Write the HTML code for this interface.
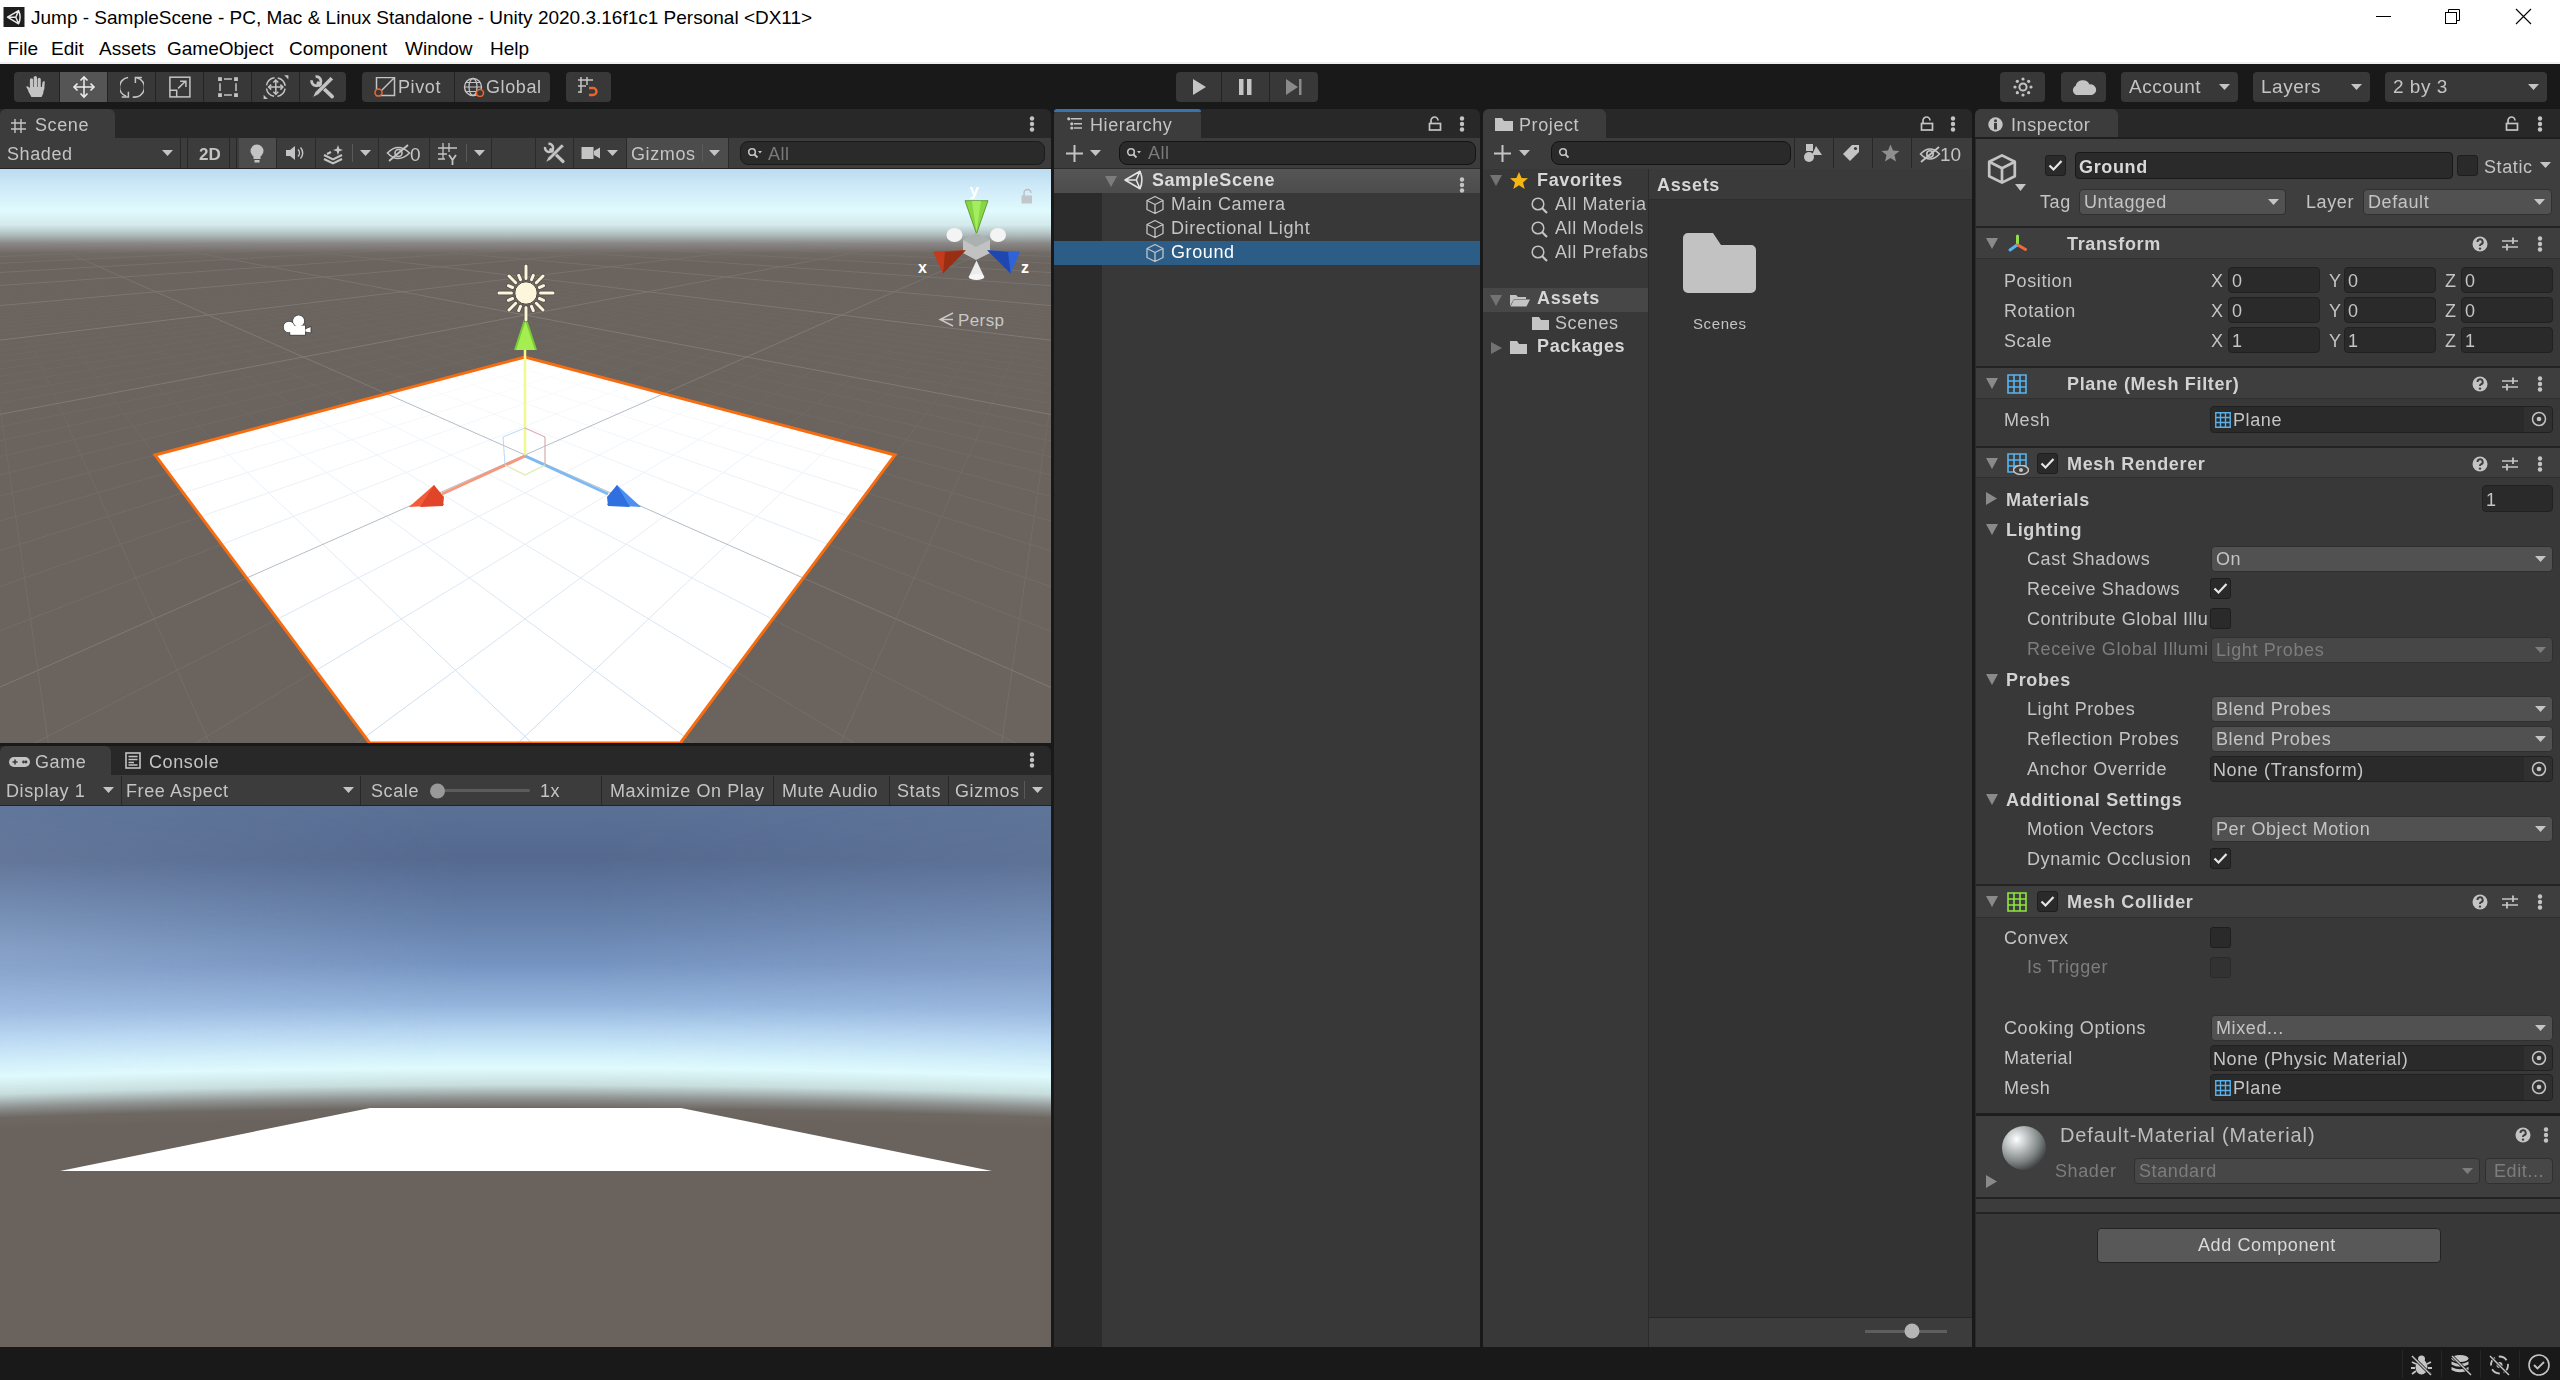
<!DOCTYPE html><html><head><meta charset="utf-8"><style>html,body{margin:0;padding:0;width:2560px;height:1380px;overflow:hidden;background:#191919;}body{position:relative;font-family:"Liberation Sans",sans-serif;}</style></head><body><div style="position:absolute;left:0px;top:0px;width:2560px;height:64px;background:#ffffff;"></div>
<div style="position:absolute;left:0px;top:62px;width:2560px;height:2px;background:#f0f0f0;"></div>
<svg style="position:absolute;left:3px;top:7px;" width="22" height="20" viewBox="0 0 22 20"><rect x="0.5" y="0" width="21" height="20" fill="#1e1e1e"/><path d="M4.5 10.2 L15.6 3.6 Q18.6 10.2 15.6 16.8 Z M4.5 10.2 H12.8 L15.6 3.6 M12.8 10.2 L15.6 16.8" fill="none" stroke="#e8e8e8" stroke-width="1.5" stroke-linejoin="round"/></svg>
<div style="position:absolute;left:31px;top:8px;font:normal 19px/1 'Liberation Sans',sans-serif;color:#000;white-space:nowrap;">Jump - SampleScene - PC, Mac &amp; Linux Standalone - Unity 2020.3.16f1c1 Personal &lt;DX11&gt;</div>
<div style="position:absolute;left:7.5px;top:39px;font:normal 19px/1 'Liberation Sans',sans-serif;color:#000;white-space:nowrap;">File</div>
<div style="position:absolute;left:51px;top:39px;font:normal 19px/1 'Liberation Sans',sans-serif;color:#000;white-space:nowrap;">Edit</div>
<div style="position:absolute;left:99px;top:39px;font:normal 19px/1 'Liberation Sans',sans-serif;color:#000;white-space:nowrap;">Assets</div>
<div style="position:absolute;left:167px;top:39px;font:normal 19px/1 'Liberation Sans',sans-serif;color:#000;white-space:nowrap;">GameObject</div>
<div style="position:absolute;left:289px;top:39px;font:normal 19px/1 'Liberation Sans',sans-serif;color:#000;white-space:nowrap;">Component</div>
<div style="position:absolute;left:405px;top:39px;font:normal 19px/1 'Liberation Sans',sans-serif;color:#000;white-space:nowrap;">Window</div>
<div style="position:absolute;left:490px;top:39px;font:normal 19px/1 'Liberation Sans',sans-serif;color:#000;white-space:nowrap;">Help</div>
<div style="position:absolute;left:2376px;top:16px;width:15px;height:1px;background:#000;"></div>
<svg style="position:absolute;left:2444px;top:8px;" width="18" height="18" viewBox="0 0 18 18"><rect x="1.5" y="4.5" width="11" height="11" fill="none" stroke="#000" stroke-width="1"/><path d="M4.5 4.5 V1.5 H15.5 V12.5 H12.5" fill="none" stroke="#000" stroke-width="1"/></svg>
<svg style="position:absolute;left:2515px;top:8px;" width="17" height="17" viewBox="0 0 17 17"><path d="M1 1 L16 16 M16 1 L1 16" stroke="#000" stroke-width="1.1"/></svg>
<div style="position:absolute;left:0px;top:64px;width:2560px;height:45px;background:#191919;"></div>
<div style="position:absolute;left:14px;top:72px;width:332px;height:30px;background:#383838;border-radius:4px;"></div>
<div style="position:absolute;left:60px;top:72px;width:47px;height:30px;background:#555555;"></div>
<div style="position:absolute;left:59px;top:72px;width:1px;height:30px;background:#232323;"></div>
<div style="position:absolute;left:107px;top:72px;width:1px;height:30px;background:#232323;"></div>
<div style="position:absolute;left:155px;top:72px;width:1px;height:30px;background:#232323;"></div>
<div style="position:absolute;left:203px;top:72px;width:1px;height:30px;background:#232323;"></div>
<div style="position:absolute;left:251px;top:72px;width:1px;height:30px;background:#232323;"></div>
<div style="position:absolute;left:299px;top:72px;width:1px;height:30px;background:#232323;"></div>
<svg style="position:absolute;left:24px;top:75px;" width="24" height="24" viewBox="0 0 24 24"><g fill="#c4c4c4"><path d="M2.2 11.8 Q3.3 10.6 4.6 11.9 L8.2 16.2 L6.5 19.5 Z"/><rect x="5.9" y="3.2" width="3.2" height="13" rx="1.6"/><rect x="9.7" y="1" width="3.3" height="15" rx="1.6"/><rect x="13.6" y="2.8" width="3.2" height="13" rx="1.6"/><path d="M17.4 15 L18.6 6.8 Q19.6 5.6 20.8 6.6 L20.2 15 Z"/><path d="M5.9 12 H20.2 L19.2 18.5 L17.6 22 H7.4 L4.5 16.5 Z"/></g></svg>
<svg style="position:absolute;left:72px;top:75px;" width="24" height="24" viewBox="0 0 24 24"><path d="M12 2 V22 M2 12 H22" stroke="#eeeeee" stroke-width="1.5"/><path d="M8.5 5.5 L12 2 L15.5 5.5 M8.5 18.5 L12 22 L15.5 18.5 M5.5 8.5 L2 12 L5.5 15.5 M18.5 8.5 L22 12 L18.5 15.5" stroke="#eeeeee" stroke-width="1.6" fill="none"/></svg>
<svg style="position:absolute;left:120px;top:76px;" width="24" height="24" viewBox="0 0 24 24"><path d="M8.1 1.6 A9.6 9.6 0 0 0 6.2 20.3" fill="none" stroke="#c4c4c4" stroke-width="1.5"/><path d="M1.8 20.9 H8.4 V15.7" fill="none" stroke="#c4c4c4" stroke-width="1.5"/><path d="M12.7 20.9 A9.6 9.6 0 0 0 16.7 1.8" fill="none" stroke="#c4c4c4" stroke-width="1.5"/><path d="M15.4 7.1 V1.6 H21.9" fill="none" stroke="#c4c4c4" stroke-width="1.5"/></svg>
<svg style="position:absolute;left:168px;top:76px;" width="24" height="24" viewBox="0 0 24 24"><rect x="1.9" y="1.2" width="20" height="19.7" fill="none" stroke="#c4c4c4" stroke-width="1.5"/><path d="M1.9 14.3 H8.7 V20.9" fill="none" stroke="#c4c4c4" stroke-width="1.5"/><path d="M10.2 12.4 L17.4 5.2 M12.1 5.2 H17.9 V11.1" fill="none" stroke="#c4c4c4" stroke-width="1.5"/></svg>
<svg style="position:absolute;left:216px;top:76px;" width="24" height="24" viewBox="0 0 24 24"><g fill="#c4c4c4"><rect x="2.1" y="1.2" width="3.8" height="3.8"/><rect x="18.1" y="1.2" width="3.8" height="3.8"/><rect x="2.1" y="17.2" width="3.8" height="3.8"/><rect x="18.1" y="17.2" width="3.8" height="3.8"/></g><path d="M8 3.1 H15.9 M8 19.1 H15.9 M4 7.2 V15 M20 7.2 V15" stroke="#c4c4c4" stroke-width="1.5"/></svg>
<svg style="position:absolute;left:262px;top:75px;" width="27" height="25" viewBox="0 0 27 25"><circle cx="13.8" cy="12.1" r="9.4" fill="none" stroke="#c4c4c4" stroke-width="1.5" stroke-dasharray="11.5 3.3" stroke-dashoffset="-1.6"/><path d="M13.8 5 V19.2 M6.7 12.1 H20.9" stroke="#c4c4c4" stroke-width="1.5"/><path d="M11.3 7.5 L13.8 5 L16.3 7.5 M11.3 16.7 L13.8 19.2 L16.3 16.7 M9.2 9.6 L6.7 12.1 L9.2 14.6 M18.4 9.6 L20.9 12.1 L18.4 14.6" fill="none" stroke="#c4c4c4" stroke-width="1.5"/><polygon points="22.2,0.3 26.4,0.3 26.4,4.5" fill="#c4c4c4"/><polygon points="1.6,19.8 1.6,24 5.8,24" fill="#c4c4c4"/></svg>
<svg style="position:absolute;left:310px;top:75px;" width="25" height="25" viewBox="0 0 25 25"><path d="M8.2 8.2 L22.2 21.6" stroke="#c4c4c4" stroke-width="3.6" stroke-linecap="round"/><path d="M1.8 5.2 A4.6 4.6 0 1 0 5.6 1.6" fill="none" stroke="#c4c4c4" stroke-width="2.8"/><polygon points="2.5,22.5 5.1,17.1 20.6,1.6 23.4,4.4 7.9,19.9" fill="#c4c4c4" stroke="#383838" stroke-width="0.8"/></svg>
<div style="position:absolute;left:362px;top:72px;width:188px;height:30px;background:#383838;border-radius:4px;"></div>
<div style="position:absolute;left:454px;top:72px;width:1px;height:30px;background:#232323;"></div>
<svg style="position:absolute;left:374px;top:77px;" width="22" height="20" viewBox="0 0 22 20"><rect x="2.5" y="0.5" width="18" height="18" fill="none" stroke="#c4c4c4" stroke-width="1.5"/><path d="M6 15 L20 1" stroke="#c4c4c4" stroke-width="1.5"/><circle cx="4.5" cy="15.5" r="3.5" fill="#383838" stroke="#f0642a" stroke-width="1.6"/></svg>
<div style="position:absolute;left:398px;top:78px;font:normal 18px/1 'Liberation Sans',sans-serif;color:#c4c4c4;white-space:nowrap;letter-spacing:0.6px;will-change:transform;">Pivot</div>
<svg style="position:absolute;left:463px;top:77px;" width="23" height="20" viewBox="0 0 23 20"><circle cx="10" cy="10" r="8.5" fill="none" stroke="#c4c4c4" stroke-width="1.4"/><ellipse cx="10" cy="10" rx="4" ry="8.5" fill="none" stroke="#c4c4c4" stroke-width="1.3"/><path d="M1.5 10 H18.5 M3 5.5 H17 M3 14.5 H17" stroke="#c4c4c4" stroke-width="1.2"/><circle cx="17" cy="16" r="3.5" fill="#383838" stroke="#f0642a" stroke-width="1.6"/></svg>
<div style="position:absolute;left:486px;top:78px;font:normal 18px/1 'Liberation Sans',sans-serif;color:#c4c4c4;white-space:nowrap;letter-spacing:0.6px;will-change:transform;">Global</div>
<div style="position:absolute;left:566px;top:72px;width:45px;height:30px;background:#383838;border-radius:4px;"></div>
<svg style="position:absolute;left:577px;top:76px;" width="24" height="22" viewBox="0 0 24 22"><path d="M4 1 V17 M10 1 V9 M1 4 H16 M1 10 H9 M1 16 H4" stroke="#c4c4c4" stroke-width="1.5"/><path d="M12 12 H16 A3.5 3.5 0 0 1 16 19 H12" fill="none" stroke="#f0642a" stroke-width="2.4"/></svg>
<div style="position:absolute;left:1176px;top:72px;width:142px;height:30px;background:#383838;border-radius:4px;"></div>
<div style="position:absolute;left:1221px;top:72px;width:1px;height:30px;background:#232323;"></div>
<div style="position:absolute;left:1269px;top:72px;width:1px;height:30px;background:#232323;"></div>
<svg style="position:absolute;left:1189px;top:77px;" width="20" height="20" viewBox="0 0 20 20"><polygon points="4,2 17,10 4,18" fill="#c4c4c4"/></svg>
<svg style="position:absolute;left:1236px;top:78px;" width="20" height="18" viewBox="0 0 20 18"><rect x="3" y="1" width="4.5" height="16" fill="#c4c4c4"/><rect x="11" y="1" width="4.5" height="16" fill="#c4c4c4"/></svg>
<svg style="position:absolute;left:1284px;top:78px;" width="20" height="18" viewBox="0 0 20 18"><polygon points="2,1 14,9 2,17" fill="#8a8a8a"/><rect x="15" y="1" width="2.5" height="16" fill="#8a8a8a"/></svg>
<div style="position:absolute;left:2000px;top:72px;width:45px;height:30px;background:#383838;border-radius:4px;"></div>
<svg style="position:absolute;left:2012px;top:76px;" width="22" height="22" viewBox="0 0 22 22"><circle cx="11" cy="11" r="3.6" fill="none" stroke="#c4c4c4" stroke-width="2"/><circle cx="19.00" cy="11.00" r="1.6" fill="#c4c4c4"/><circle cx="16.66" cy="16.66" r="1.6" fill="#c4c4c4"/><circle cx="11.00" cy="19.00" r="1.6" fill="#c4c4c4"/><circle cx="5.34" cy="16.66" r="1.6" fill="#c4c4c4"/><circle cx="3.00" cy="11.00" r="1.6" fill="#c4c4c4"/><circle cx="5.34" cy="5.34" r="1.6" fill="#c4c4c4"/><circle cx="11.00" cy="3.00" r="1.6" fill="#c4c4c4"/><circle cx="16.66" cy="5.34" r="1.6" fill="#c4c4c4"/></svg>
<div style="position:absolute;left:2061px;top:72px;width:45px;height:30px;background:#383838;border-radius:4px;"></div>
<svg style="position:absolute;left:2070px;top:78px;" width="28" height="18" viewBox="0 0 28 18"><path d="M6 17 A5 5 0 0 1 5.5 8 A7.5 7.5 0 0 1 19.5 6.5 A5.2 5.2 0 0 1 22 17 Z" fill="#c4c4c4"/></svg>
<div style="position:absolute;left:2121px;top:72px;width:117px;height:30px;background:#383838;border-radius:4px;"></div>
<div style="position:absolute;left:2129px;top:77px;font:normal 19px/1 'Liberation Sans',sans-serif;color:#c4c4c4;white-space:nowrap;letter-spacing:0.5px;will-change:transform;">Account</div>
<svg style="position:absolute;left:2218.5px;top:84px;" width="11" height="6" viewBox="0 0 11 6"><polygon points="0,0 11,0 5.5,6" fill="#c4c4c4"/></svg>
<div style="position:absolute;left:2253px;top:72px;width:117px;height:30px;background:#383838;border-radius:4px;"></div>
<div style="position:absolute;left:2261px;top:77px;font:normal 19px/1 'Liberation Sans',sans-serif;color:#c4c4c4;white-space:nowrap;letter-spacing:0.5px;will-change:transform;">Layers</div>
<svg style="position:absolute;left:2350.5px;top:84px;" width="11" height="6" viewBox="0 0 11 6"><polygon points="0,0 11,0 5.5,6" fill="#c4c4c4"/></svg>
<div style="position:absolute;left:2385px;top:72px;width:162px;height:30px;background:#383838;border-radius:4px;"></div>
<div style="position:absolute;left:2393px;top:77px;font:normal 19px/1 'Liberation Sans',sans-serif;color:#c4c4c4;white-space:nowrap;letter-spacing:0.5px;will-change:transform;">2 by 3</div>
<svg style="position:absolute;left:2527.5px;top:84px;" width="11" height="6" viewBox="0 0 11 6"><polygon points="0,0 11,0 5.5,6" fill="#c4c4c4"/></svg>
<div style="position:absolute;left:0px;top:109px;width:1051px;height:29px;background:#282828;border-top-right-radius:6px;"></div>
<div style="position:absolute;left:0px;top:109px;width:115px;height:29px;background:#3c3c3c;border-top-left-radius:6px;border-top-right-radius:6px;"></div>
<svg style="position:absolute;left:10px;top:118px;" width="17" height="16" viewBox="0 0 17 16"><path d="M5 1 V15 M11 1 V15 M1 5 H16 M1 11 H16" stroke="#c4c4c4" stroke-width="1.4"/></svg>
<div style="position:absolute;left:35px;top:116px;font:normal 18px/1 'Liberation Sans',sans-serif;color:#c4c4c4;white-space:nowrap;letter-spacing:0.6px;will-change:transform;">Scene</div>
<svg style="position:absolute;left:1029px;top:116px;" width="6" height="16" viewBox="0 0 6 16"><circle cx="3" cy="2.5" r="2.2" fill="#c4c4c4"/><circle cx="3" cy="8" r="2.2" fill="#c4c4c4"/><circle cx="3" cy="13.5" r="2.2" fill="#c4c4c4"/></svg>
<div style="position:absolute;left:0px;top:138px;width:1051px;height:31px;background:#3c3c3c;"></div>
<div style="position:absolute;left:0px;top:168px;width:1051px;height:1px;background:#232323;"></div>
<div style="position:absolute;left:7px;top:145px;font:normal 18px/1 'Liberation Sans',sans-serif;color:#c4c4c4;white-space:nowrap;letter-spacing:0.6px;will-change:transform;">Shaded</div>
<svg style="position:absolute;left:162.0px;top:150px;" width="11" height="6" viewBox="0 0 11 6"><polygon points="0,0 11,0 5.5,6" fill="#c4c4c4"/></svg>
<div style="position:absolute;left:180px;top:138px;width:1px;height:30px;background:#282828;"></div>
<div style="position:absolute;left:187px;top:138px;width:1px;height:30px;background:#282828;"></div>
<div style="position:absolute;left:229px;top:138px;width:1px;height:30px;background:#282828;"></div>
<div style="position:absolute;left:236px;top:138px;width:1px;height:30px;background:#282828;"></div>
<div style="position:absolute;left:199px;top:146px;font:bold 17px/1 'Liberation Sans',sans-serif;color:#c4c4c4;white-space:nowrap;will-change:transform;">2D</div>
<div style="position:absolute;left:239px;top:138px;width:37px;height:30px;background:#4c4c4c;"></div>
<div style="position:absolute;left:627px;top:138px;width:101px;height:30px;background:#4c4c4c;"></div>
<div style="position:absolute;left:276px;top:138px;width:1px;height:30px;background:#2a2a2a;"></div>
<div style="position:absolute;left:315px;top:138px;width:1px;height:30px;background:#2a2a2a;"></div>
<div style="position:absolute;left:378px;top:138px;width:1px;height:30px;background:#2a2a2a;"></div>
<div style="position:absolute;left:429px;top:138px;width:1px;height:30px;background:#2a2a2a;"></div>
<div style="position:absolute;left:491px;top:138px;width:1px;height:30px;background:#2a2a2a;"></div>
<div style="position:absolute;left:535px;top:138px;width:1px;height:30px;background:#2a2a2a;"></div>
<div style="position:absolute;left:573px;top:138px;width:1px;height:30px;background:#2a2a2a;"></div>
<div style="position:absolute;left:626px;top:138px;width:1px;height:30px;background:#2a2a2a;"></div>
<div style="position:absolute;left:728px;top:138px;width:1px;height:30px;background:#2a2a2a;"></div>
<svg style="position:absolute;left:248px;top:143px;" width="18" height="22" viewBox="0 0 18 22"><circle cx="9" cy="8" r="6.5" fill="#c4c4c4"/><rect x="5.5" y="13" width="7" height="3" fill="#c4c4c4"/><rect x="6.5" y="17" width="5" height="2.5" fill="#c4c4c4"/></svg>
<svg style="position:absolute;left:285px;top:144px;" width="20" height="18" viewBox="0 0 20 18"><rect x="1" y="6" width="4" height="6" fill="#c4c4c4"/><polygon points="5,6 10,2 10,16 5,12" fill="#c4c4c4"/><path d="M13 5.5 A5 5 0 0 1 13 12.5 M15.5 3.5 A8 8 0 0 1 15.5 14.5" stroke="#c4c4c4" stroke-width="1.5" fill="none"/></svg>
<svg style="position:absolute;left:322px;top:143px;" width="24" height="22" viewBox="0 0 24 22"><path d="M2 12 L11 16.5 L20 12 M2 16 L11 20.5 L20 16" stroke="#c4c4c4" stroke-width="2" fill="none"/><path d="M16 2 L17.3 5.7 L21 7 L17.3 8.3 L16 12 L14.7 8.3 L11 7 L14.7 5.7 Z" fill="#c4c4c4"/><path d="M5 11 L9 9" stroke="#c4c4c4" stroke-width="2"/></svg>
<div style="position:absolute;left:352px;top:144px;width:1px;height:18px;background:#5a5a5a;"></div>
<svg style="position:absolute;left:359.5px;top:150px;" width="11" height="6" viewBox="0 0 11 6"><polygon points="0,0 11,0 5.5,6" fill="#c4c4c4"/></svg>
<svg style="position:absolute;left:386px;top:143px;" width="26" height="20" viewBox="0 0 26 20"><path d="M1.5 10 Q12 -1 23.5 10 Q12 21 1.5 10 Z" fill="none" stroke="#c4c4c4" stroke-width="1.6"/><circle cx="12.5" cy="10" r="3.5" fill="none" stroke="#c4c4c4" stroke-width="1.6"/><path d="M3 18 L22 2" stroke="#c4c4c4" stroke-width="1.8"/></svg>
<div style="position:absolute;left:410px;top:145px;font:normal 19px/1 'Liberation Sans',sans-serif;color:#c4c4c4;white-space:nowrap;will-change:transform;">0</div>
<svg style="position:absolute;left:437px;top:142px;" width="24" height="24" viewBox="0 0 24 24"><path d="M6 1 V17 M12 1 V10 M1 6 H20 M1 12 H10 M1 17 H8" stroke="#c4c4c4" stroke-width="1.3"/><path d="M12 13 L15.5 18 L19 13 M15.5 18 V23" stroke="#c4c4c4" stroke-width="1.8" fill="none"/></svg>
<div style="position:absolute;left:466px;top:144px;width:1px;height:18px;background:#5a5a5a;"></div>
<svg style="position:absolute;left:473.5px;top:150px;" width="11" height="6" viewBox="0 0 11 6"><polygon points="0,0 11,0 5.5,6" fill="#c4c4c4"/></svg>
<svg style="position:absolute;left:542px;top:141px;" width="25" height="25" viewBox="0 0 25 25"><g transform="translate(1.5 1.5) scale(0.88)"><path d="M8.2 8.2 L22.2 21.6" stroke="#c4c4c4" stroke-width="3.6" stroke-linecap="round"/><path d="M1.8 5.2 A4.6 4.6 0 1 0 5.6 1.6" fill="none" stroke="#c4c4c4" stroke-width="2.8"/><polygon points="2.5,22.5 5.1,17.1 20.6,1.6 23.4,4.4 7.9,19.9" fill="#c4c4c4" stroke="#3c3c3c" stroke-width="0.8"/></g></svg>
<svg style="position:absolute;left:581px;top:146px;" width="20" height="14" viewBox="0 0 20 14"><rect x="0.5" y="1" width="12" height="12" fill="#c4c4c4"/><polygon points="13,5 19,1.5 19,12.5 13,9" fill="#c4c4c4"/></svg>
<svg style="position:absolute;left:607.0px;top:150px;" width="11" height="6" viewBox="0 0 11 6"><polygon points="0,0 11,0 5.5,6" fill="#c4c4c4"/></svg>
<div style="position:absolute;left:631px;top:145px;font:normal 18px/1 'Liberation Sans',sans-serif;color:#c4c4c4;white-space:nowrap;letter-spacing:0.6px;will-change:transform;">Gizmos</div>
<div style="position:absolute;left:702px;top:144px;width:1px;height:18px;background:#5a5a5a;"></div>
<svg style="position:absolute;left:709.0px;top:150px;" width="11" height="6" viewBox="0 0 11 6"><polygon points="0,0 11,0 5.5,6" fill="#c4c4c4"/></svg>
<div style="position:absolute;left:740px;top:141px;width:305px;height:24px;box-sizing:border-box;background:#2a2a2a;border:1px solid #1b1b1b;border-radius:8px;"></div>
<svg style="position:absolute;left:747px;top:147px;" width="16" height="12" viewBox="0 0 16 12"><circle cx="5" cy="5" r="3.3" fill="none" stroke="#c4c4c4" stroke-width="1.6"/><path d="M7.5 7.5 L10.5 10.5" stroke="#c4c4c4" stroke-width="1.8"/><polygon points="11,4 15,4 13,6.5" fill="#c4c4c4"/></svg>
<div style="position:absolute;left:768px;top:145px;font:normal 18px/1 'Liberation Sans',sans-serif;color:#7a7a7a;white-space:nowrap;letter-spacing:0.5px;will-change:transform;">All</div>
<svg style="position:absolute;left:0px;top:169px;" width="1051" height="574" viewBox="0 0 1051 574"><defs><linearGradient id="sky" gradientUnits="userSpaceOnUse" x1="0" y1="169" x2="0" y2="262"><stop offset="0" stop-color="#bcdbf1"/><stop offset="0.2" stop-color="#cfeaf8"/><stop offset="0.45" stop-color="#e0fafd"/><stop offset="0.6" stop-color="#d4eaec"/><stop offset="0.7" stop-color="#b2c0c1"/><stop offset="0.8" stop-color="#8a8887"/><stop offset="0.9" stop-color="#716b67"/><stop offset="1" stop-color="#6a635e"/></linearGradient><linearGradient id="fadeMinor" gradientUnits="userSpaceOnUse" x1="0" y1="250" x2="0" y2="743"><stop offset="0" stop-color="#fff" stop-opacity="0"/><stop offset="0.1" stop-color="#fff" stop-opacity="0.25"/><stop offset="0.5" stop-color="#fff" stop-opacity="0.8"/><stop offset="1" stop-color="#fff" stop-opacity="1"/></linearGradient><linearGradient id="fadePlane" gradientUnits="userSpaceOnUse" x1="0" y1="357" x2="0" y2="743"><stop offset="0" stop-color="#fff" stop-opacity="0.05"/><stop offset="0.4" stop-color="#fff" stop-opacity="0.4"/><stop offset="1" stop-color="#fff" stop-opacity="0.9"/></linearGradient><mask id="mPlane" maskUnits="userSpaceOnUse" x="0" y="169" width="1051" height="574"><rect x="0" y="169" width="1051" height="574" fill="url(#fadePlane)"/></mask><linearGradient id="fadeMajor" gradientUnits="userSpaceOnUse" x1="0" y1="240" x2="0" y2="340"><stop offset="0" stop-color="#fff" stop-opacity="0"/><stop offset="0.25" stop-color="#fff" stop-opacity="0.6"/><stop offset="0.8" stop-color="#fff" stop-opacity="1"/><stop offset="1" stop-color="#fff" stop-opacity="1"/></linearGradient><mask id="mMinor" maskUnits="userSpaceOnUse" x="0" y="169" width="1051" height="574"><rect x="0" y="169" width="1051" height="574" fill="url(#fadeMinor)"/></mask><mask id="mMajor" maskUnits="userSpaceOnUse" x="0" y="169" width="1051" height="574"><rect x="0" y="169" width="1051" height="574" fill="url(#fadeMajor)"/></mask><clipPath id="planeClip"><polygon points="155,455 525,357 895,455 680.4,743 369.6,743"/></clipPath></defs><g transform="translate(0,-169)"><rect x="0" y="169" width="1051" height="574" fill="#6a635e"/><rect x="0" y="169" width="1051" height="92" fill="url(#sky)"/><g mask="url(#mMinor)"><path d="M1054.2 211.7 L-49655.8 2732.2 M-4.2 211.7 L50705.8 2732.2 M1054.6 211.7 L-48892.6 2732.2 M-4.6 211.7 L49942.6 2732.2 M1054.9 211.7 L-48129.4 2732.2 M-4.9 211.7 L49179.4 2732.2 M1055.3 211.7 L-47366.1 2732.2 M-5.3 211.7 L48416.1 2732.2 M1055.6 211.7 L-46602.9 2732.2 M-5.6 211.7 L47652.9 2732.2 M1056.0 211.7 L-45839.7 2732.2 M-6.0 211.7 L46889.7 2732.2 M1056.3 211.7 L-45076.5 2732.2 M-6.3 211.7 L46126.5 2732.2 M1056.7 211.7 L-44313.3 2732.2 M-6.7 211.7 L45363.3 2732.2 M1057.0 211.7 L-43550.1 2732.2 M-7.0 211.7 L44600.1 2732.2 M1057.7 211.7 L-42023.7 2732.2 M-7.7 211.7 L43073.7 2732.2 M1058.1 211.7 L-41260.5 2732.2 M-8.1 211.7 L42310.5 2732.2 M1058.4 211.7 L-40497.3 2732.2 M-8.4 211.7 L41547.3 2732.2 M1058.8 211.7 L-39734.1 2732.2 M-8.8 211.7 L40784.1 2732.2 M1059.2 211.7 L-38970.9 2732.2 M-9.2 211.7 L40020.9 2732.2 M1059.5 211.7 L-38207.7 2732.2 M-9.5 211.7 L39257.7 2732.2 M1059.9 211.7 L-37444.5 2732.2 M-9.9 211.7 L38494.5 2732.2 M1060.2 211.7 L-36681.3 2732.2 M-10.2 211.7 L37731.3 2732.2 M1060.6 211.7 L-35918.1 2732.2 M-10.6 211.7 L36968.1 2732.2 M1061.3 211.7 L-34391.7 2732.2 M-11.3 211.7 L35441.7 2732.2 M1061.7 211.7 L-33628.4 2732.2 M-11.7 211.7 L34678.4 2732.2 M1062.0 211.7 L-32865.2 2732.2 M-12.0 211.7 L33915.2 2732.2 M1062.4 211.7 L-32102.0 2732.2 M-12.4 211.7 L33152.0 2732.2 M1062.7 211.7 L-31338.8 2732.2 M-12.7 211.7 L32388.8 2732.2 M1063.1 211.7 L-30575.6 2732.2 M-13.1 211.7 L31625.6 2732.2 M1063.4 211.7 L-29812.4 2732.2 M-13.4 211.7 L30862.4 2732.2 M1063.8 211.7 L-29049.2 2732.2 M-13.8 211.7 L30099.2 2732.2 M1064.2 211.7 L-28286.0 2732.2 M-14.2 211.7 L29336.0 2732.2 M1064.9 211.7 L-26759.6 2732.2 M-14.9 211.7 L27809.6 2732.2 M1065.2 211.7 L-25996.4 2732.2 M-15.2 211.7 L27046.4 2732.2 M1065.6 211.7 L-25233.2 2732.2 M-15.6 211.7 L26283.2 2732.2 M1066.0 211.7 L-24470.0 2732.2 M-16.0 211.7 L25520.0 2732.2 M1066.3 211.7 L-23706.8 2732.2 M-16.3 211.7 L24756.8 2732.2 M1066.7 211.7 L-22943.6 2732.2 M-16.7 211.7 L23993.6 2732.2 M1067.0 211.7 L-22180.4 2732.2 M-17.0 211.7 L23230.4 2732.2 M1067.4 211.7 L-21417.2 2732.2 M-17.4 211.7 L22467.2 2732.2 M1067.8 211.7 L-20654.0 2732.2 M-17.8 211.7 L21704.0 2732.2 M1068.5 211.7 L-19127.5 2732.2 M-18.5 211.7 L20177.5 2732.2 M1068.8 211.7 L-18364.3 2732.2 M-18.8 211.7 L19414.3 2732.2 M1069.2 211.7 L-17601.1 2732.2 M-19.2 211.7 L18651.1 2732.2 M1069.6 211.7 L-16837.9 2732.2 M-19.6 211.7 L17887.9 2732.2 M1069.9 211.7 L-16074.7 2732.2 M-19.9 211.7 L17124.7 2732.2 M1070.3 211.7 L-15311.5 2732.2 M-20.3 211.7 L16361.5 2732.2 M1070.7 211.7 L-14548.3 2732.2 M-20.7 211.7 L15598.3 2732.2 M1071.0 211.7 L-13785.1 2732.2 M-21.0 211.7 L14835.1 2732.2 M1071.4 211.7 L-13021.9 2732.2 M-21.4 211.7 L14071.9 2732.2 M1072.1 211.7 L-11495.5 2732.2 M-22.1 211.7 L12545.5 2732.2 M1072.5 211.7 L-10732.3 2732.2 M-22.5 211.7 L11782.3 2732.2 M1072.8 211.7 L-9969.1 2732.2 M-22.8 211.7 L11019.1 2732.2 M1073.2 211.7 L-9205.9 2732.2 M-23.2 211.7 L10255.9 2732.2 M1073.6 211.7 L-8442.7 2732.2 M-23.6 211.7 L9492.7 2732.2 M1073.9 211.7 L-7679.5 2732.2 M-23.9 211.7 L8729.5 2732.2 M1074.3 211.7 L-6916.3 2732.2 M-24.3 211.7 L7966.3 2732.2 M1074.7 211.7 L-6153.0 2732.2 M-24.7 211.7 L7203.0 2732.2 M1075.0 211.7 L-5389.8 2732.2 M-25.0 211.7 L6439.8 2732.2 M1075.8 211.7 L-3863.4 2732.2 M-25.8 211.7 L4913.4 2732.2 M1076.1 211.7 L-3100.2 2732.2 M-26.1 211.7 L4150.2 2732.2 M1076.5 211.7 L-2337.0 2732.2 M-26.5 211.7 L3387.0 2732.2 M1076.9 211.7 L-1573.8 2732.2 M-26.9 211.7 L2623.8 2732.2 M1077.2 211.7 L-810.6 2732.2 M-27.2 211.7 L1860.6 2732.2 M1077.6 211.7 L-47.4 2732.2 M-27.6 211.7 L1097.4 2732.2 M1078.0 211.7 L715.8 2732.2 M-28.0 211.7 L334.2 2732.2 M1078.3 211.7 L1479.0 2732.2 M-28.3 211.7 L-429.0 2732.2 M1078.7 211.7 L2242.2 2732.2 M-28.7 211.7 L-1192.2 2732.2 M1079.4 211.7 L3768.6 2732.2 M-29.4 211.7 L-2718.6 2732.2 M1079.8 211.7 L4531.8 2732.2 M-29.8 211.7 L-3481.8 2732.2 M1080.2 211.7 L5295.0 2732.2 M-30.2 211.7 L-4245.0 2732.2 M1080.5 211.7 L6058.2 2732.2 M-30.5 211.7 L-5008.2 2732.2" stroke="#746e6a" stroke-width="1" fill="none"/></g><g mask="url(#mMajor)"><path d="M975.5 211.6 L-233588.3 2732.2 M74.5 211.6 L234638.3 2732.2 M978.6 211.6 L-225956.3 2732.2 M71.4 211.6 L227006.3 2732.2 M981.6 211.6 L-218324.2 2732.2 M68.4 211.6 L219374.2 2732.2 M984.7 211.6 L-210692.1 2732.2 M65.3 211.6 L211742.1 2732.2 M987.8 211.6 L-203060.1 2732.2 M62.2 211.6 L204110.1 2732.2 M990.9 211.6 L-195428.0 2732.2 M59.1 211.6 L196478.0 2732.2 M994.0 211.6 L-187796.0 2732.2 M56.0 211.6 L188846.0 2732.2 M997.2 211.6 L-180163.9 2732.2 M52.8 211.6 L181213.9 2732.2 M1000.3 211.6 L-172531.9 2732.2 M49.7 211.6 L173581.9 2732.2 M1003.5 211.6 L-164899.8 2732.2 M46.5 211.6 L165949.8 2732.2 M1006.7 211.6 L-157267.8 2732.2 M43.3 211.6 L158317.8 2732.2 M1010.0 211.6 L-149635.7 2732.2 M40.0 211.6 L150685.7 2732.2 M1013.2 211.6 L-142003.6 2732.2 M36.8 211.6 L143053.6 2732.2 M1016.5 211.6 L-134371.6 2732.2 M33.5 211.6 L135421.6 2732.2 M1019.8 211.6 L-126739.5 2732.2 M30.2 211.6 L127789.5 2732.2 M1023.1 211.6 L-119107.5 2732.2 M26.9 211.6 L120157.5 2732.2 M1026.4 211.7 L-111475.4 2732.2 M23.6 211.7 L112525.4 2732.2 M1029.8 211.7 L-103843.4 2732.2 M20.2 211.7 L104893.4 2732.2 M1033.1 211.7 L-96211.3 2732.2 M16.9 211.7 L97261.3 2732.2 M1036.5 211.7 L-88579.3 2732.2 M13.5 211.7 L89629.3 2732.2 M1040.0 211.7 L-80947.2 2732.2 M10.0 211.7 L81997.2 2732.2 M1043.4 211.7 L-73315.1 2732.2 M6.6 211.7 L74365.1 2732.2 M1046.9 211.7 L-65683.1 2732.2 M3.1 211.7 L66733.1 2732.2 M1050.3 211.7 L-58051.0 2732.2 M-0.3 211.7 L59101.0 2732.2 M1053.9 211.7 L-50419.0 2732.2 M-3.9 211.7 L51469.0 2732.2 M1057.4 211.7 L-42786.9 2732.2 M-7.4 211.7 L43836.9 2732.2 M1060.9 211.7 L-35154.9 2732.2 M-10.9 211.7 L36204.9 2732.2 M1064.5 211.7 L-27522.8 2732.2 M-14.5 211.7 L28572.8 2732.2 M1068.1 211.7 L-19890.7 2732.2 M-18.1 211.7 L20940.7 2732.2 M1071.7 211.7 L-12258.7 2732.2 M-21.7 211.7 L13308.7 2732.2 M1075.4 211.7 L-4626.6 2732.2 M-25.4 211.7 L5676.6 2732.2 M1079.1 211.7 L3005.4 2732.2 M-29.1 211.7 L-1955.4 2732.2" stroke="#7f7a76" stroke-width="1" fill="none"/></g><polygon points="155,455 525,357 895,455 680.4,743 369.6,743" fill="#ffffff"/><g clip-path="url(#planeClip)"><g mask="url(#mPlane)"><path d="M548.1 363.1 L168.1 472.5 M501.9 363.1 L881.9 472.5 M573.2 369.8 L183.3 492.8 M476.8 369.8 L866.7 492.8 M600.6 377.0 L201.0 516.4 M449.4 377.0 L849.0 516.4 M630.6 385.0 L221.9 544.3 M419.4 385.0 L828.1 544.3 M700.1 403.4 L277.8 618.9 M349.9 403.4 L772.2 618.9 M740.7 414.1 L316.3 670.3 M309.3 414.1 L733.7 670.3 M786.1 426.1 L365.8 736.5 M263.9 426.1 L684.2 736.5 M837.1 439.7 L432.0 824.9 M212.9 439.7 L618.0 824.9" stroke="#c3d7ea" stroke-width="1" fill="none"/></g><path d="M663.6 393.7 L247.0 577.9 M386.4 393.7 L803.0 577.9" stroke="#a7b1bb" stroke-width="1" opacity="0.85" fill="none"/></g><polygon points="155,455 525,357 895,455 680.4,743 369.6,743" fill="none" stroke="#f66c10" stroke-width="3"/><path d="M525 456 L525 350" stroke="#f2f88f" stroke-width="2.5"/><path d="M525 456 L442 494" stroke="#f7977d" stroke-width="3"/><path d="M525 456 L608 494" stroke="#7fb9f3" stroke-width="3"/><path d="M503 437 L525 428 L545 437 L545 465 L525 475 L505 465 Z" fill="none" stroke="#a8cff3" stroke-width="1" opacity="0.8"/><path d="M525 428 L545 437 L545 465" fill="none" stroke="#f5a090" stroke-width="1" opacity="0.8"/><path d="M505 465 L525 475 L545 465" fill="none" stroke="#f3f28a" stroke-width="1" opacity="0.8"/><polygon points="525.5,318 515,350 536,350" fill="#a4ee52"/><path d="M525.5 318 L515 350" stroke="#78cc36" stroke-width="2"/><path d="M525.5 318 L536 350" stroke="#78cc36" stroke-width="2"/><polygon points="409,507 434,485 444,505" fill="#f55a38"/><polygon points="434,485 444,497 443,506 420,507" fill="#e0452a"/><polygon points="641,507 617,485 607,505" fill="#4e8ff0"/><polygon points="617,485 607,497 608,506 630,507" fill="#2f6fe0"/><circle cx="526" cy="293" r="11.2" fill="#fdf5dc" stroke="#4a4542" stroke-width="1"/><path d="M540.5 293.0 L553.0 293.0 M539.4 298.5 L543.6 300.3 M536.3 303.3 L543.0 310.0 M531.5 306.4 L533.3 310.6 M526.0 307.5 L526.0 320.0 M520.5 306.4 L518.7 310.6 M515.7 303.3 L509.0 310.0 M512.6 298.5 L508.4 300.3 M511.5 293.0 L499.0 293.0 M512.6 287.5 L508.4 285.7 M515.7 282.7 L509.0 276.0 M520.5 279.6 L518.7 275.4 M526.0 278.5 L526.0 266.0 M531.5 279.6 L533.3 275.4 M536.3 282.7 L543.0 276.0 M539.4 287.5 L543.6 285.7" stroke="#4a4542" stroke-width="4.4" stroke-linecap="round" opacity="0.8"/><path d="M540.5 293.0 L553.0 293.0 M539.4 298.5 L543.6 300.3 M536.3 303.3 L543.0 310.0 M531.5 306.4 L533.3 310.6 M526.0 307.5 L526.0 320.0 M520.5 306.4 L518.7 310.6 M515.7 303.3 L509.0 310.0 M512.6 298.5 L508.4 300.3 M511.5 293.0 L499.0 293.0 M512.6 287.5 L508.4 285.7 M515.7 282.7 L509.0 276.0 M520.5 279.6 L518.7 275.4 M526.0 278.5 L526.0 266.0 M531.5 279.6 L533.3 275.4 M536.3 282.7 L543.0 276.0 M539.4 287.5 L543.6 285.7" stroke="#fdf5dc" stroke-width="3" stroke-linecap="round"/><g fill="#ffffff" stroke="#3a3634" stroke-width="0.8"><circle cx="289" cy="327" r="5.6"/><circle cx="298.6" cy="321" r="5.8"/><rect x="290" y="325.3" width="15.4" height="9.7"/><polygon points="305,329 311,326.4 311,333 305,332"/></g><g fill="#ffffff"><circle cx="289" cy="327" r="5.2"/><circle cx="298.6" cy="321" r="5.4"/><rect x="290.4" y="325.7" width="14.6" height="8.9"/></g><polygon points="965,200.7 988,200.7 976.5,233.6" fill="#86d843" stroke="#4f8a22" stroke-width="0.8"/><polygon points="972,201 981,201 976.5,232" fill="#a6ec60"/><ellipse cx="954.5" cy="235" rx="8" ry="7" fill="#f4f4f4"/><ellipse cx="998" cy="235" rx="8" ry="7" fill="#f4f4f4"/><polygon points="963,240 976,233 990,240 990,253 976,260 963,253" fill="#c2c2c2"/><polygon points="963,240 976,233 990,240 976,247" fill="#a9b1b1"/><polygon points="932.9,251.5 965.7,250.3 943,273.6" fill="#c43a1c"/><polygon points="945,252 965.7,250.3 943,273.6" fill="#9a2e12"/><polygon points="987.2,250.3 1020,251.5 1010.6,273.6" fill="#2f63da"/><polygon points="987.2,250.3 1008,252 1010.6,273.6" fill="#1f47b0"/><polygon points="976.5,260.5 968.7,277 984.3,277" fill="#ececec"/><ellipse cx="976.5" cy="277" rx="7.8" ry="3" fill="#f6f6f6"/><text x="969.5" y="196" font-family="Liberation Sans" font-size="17" font-weight="bold" fill="#ffffff">y</text><text x="918" y="273" font-family="Liberation Sans" font-size="16" font-weight="bold" fill="#ffffff">x</text><text x="1021" y="273" font-family="Liberation Sans" font-size="16" font-weight="bold" fill="#ffffff">z</text><path d="M1024 196 V193 A3.5 3.5 0 0 1 1031 193" fill="none" stroke="#b0b0b0" stroke-width="1.3" opacity="0.8"/><rect x="1021.5" y="195.5" width="10.5" height="8" fill="#bcbcbc" opacity="0.8"/><path d="M953 313 L940 319.5 L953 326 M940 319.5 H953" stroke="#c8c8c8" stroke-width="1.4" fill="none"/><text x="958" y="326" font-family="Liberation Sans" font-size="17" fill="#c8c8c8" letter-spacing="0.4">Persp</text></g></svg>
<div style="position:absolute;left:1051px;top:109px;width:3px;height:1238px;background:#191919;"></div>
<div style="position:absolute;left:0px;top:743px;width:1051px;height:3px;background:#191919;"></div>
<div style="position:absolute;left:0px;top:746px;width:1051px;height:29px;background:#282828;border-top-right-radius:6px;"></div>
<div style="position:absolute;left:0px;top:746px;width:111px;height:29px;background:#3c3c3c;border-top-left-radius:6px;border-top-right-radius:6px;"></div>
<svg style="position:absolute;left:9px;top:756px;" width="21" height="12" viewBox="0 0 21 12"><path d="M5 1 H16 A5 5 0 0 1 16 11 H5 A5 5 0 0 1 5 1 Z" fill="#c4c4c4"/><path d="M3.5 6 H8.5 M6 3.5 V8.5" stroke="#3c3c3c" stroke-width="1.6"/><circle cx="14.5" cy="6" r="1.4" fill="#3c3c3c"/><circle cx="17" cy="6" r="1.4" fill="#3c3c3c"/></svg>
<div style="position:absolute;left:34.5px;top:753px;font:normal 18px/1 'Liberation Sans',sans-serif;color:#c4c4c4;white-space:nowrap;letter-spacing:0.6px;will-change:transform;">Game</div>
<svg style="position:absolute;left:125px;top:752px;" width="16" height="17" viewBox="0 0 16 17"><rect x="1" y="1" width="14" height="15" fill="none" stroke="#c4c4c4" stroke-width="1.6"/><path d="M3.5 4.5 H12.5 M3.5 7.5 H12.5 M3.5 10.5 H9 M3.5 13 H12.5" stroke="#c4c4c4" stroke-width="1.4"/></svg>
<div style="position:absolute;left:148.75px;top:753px;font:normal 18px/1 'Liberation Sans',sans-serif;color:#c4c4c4;white-space:nowrap;letter-spacing:0.6px;will-change:transform;">Console</div>
<svg style="position:absolute;left:1029px;top:752px;" width="6" height="16" viewBox="0 0 6 16"><circle cx="3" cy="2.5" r="2.2" fill="#c4c4c4"/><circle cx="3" cy="8" r="2.2" fill="#c4c4c4"/><circle cx="3" cy="13.5" r="2.2" fill="#c4c4c4"/></svg>
<div style="position:absolute;left:0px;top:775px;width:1051px;height:31px;background:#3c3c3c;"></div>
<div style="position:absolute;left:0px;top:805px;width:1051px;height:1px;background:#232323;"></div>
<div style="position:absolute;left:6px;top:782px;font:normal 18px/1 'Liberation Sans',sans-serif;color:#c4c4c4;white-space:nowrap;letter-spacing:0.6px;will-change:transform;">Display 1</div>
<svg style="position:absolute;left:102.5px;top:787px;" width="11" height="6" viewBox="0 0 11 6"><polygon points="0,0 11,0 5.5,6" fill="#c4c4c4"/></svg>
<div style="position:absolute;left:121px;top:776px;width:1px;height:29px;background:#282828;"></div>
<div style="position:absolute;left:126px;top:782px;font:normal 18px/1 'Liberation Sans',sans-serif;color:#c4c4c4;white-space:nowrap;letter-spacing:0.6px;will-change:transform;">Free Aspect</div>
<svg style="position:absolute;left:342.5px;top:787px;" width="11" height="6" viewBox="0 0 11 6"><polygon points="0,0 11,0 5.5,6" fill="#c4c4c4"/></svg>
<div style="position:absolute;left:360px;top:776px;width:1px;height:29px;background:#282828;"></div>
<div style="position:absolute;left:370.5px;top:782px;font:normal 18px/1 'Liberation Sans',sans-serif;color:#c4c4c4;white-space:nowrap;letter-spacing:0.6px;will-change:transform;">Scale</div>
<div style="position:absolute;left:437px;top:789px;width:93px;height:3px;background:#5c5c5c;border-radius:2px;"></div>
<svg style="position:absolute;left:430px;top:783px;" width="16" height="16" viewBox="0 0 16 16"><circle cx="7.5" cy="8" r="7.5" fill="#999999"/></svg>
<div style="position:absolute;left:540px;top:782px;font:normal 18px/1 'Liberation Sans',sans-serif;color:#c4c4c4;white-space:nowrap;letter-spacing:0.6px;will-change:transform;">1x</div>
<div style="position:absolute;left:601px;top:776px;width:1px;height:29px;background:#282828;"></div>
<div style="position:absolute;left:773px;top:776px;width:1px;height:29px;background:#282828;"></div>
<div style="position:absolute;left:889px;top:776px;width:1px;height:29px;background:#282828;"></div>
<div style="position:absolute;left:948px;top:776px;width:1px;height:29px;background:#282828;"></div>
<div style="position:absolute;left:609.6px;top:782px;font:normal 18px/1 'Liberation Sans',sans-serif;color:#c4c4c4;white-space:nowrap;letter-spacing:0.6px;will-change:transform;">Maximize On Play</div>
<div style="position:absolute;left:781.7px;top:782px;font:normal 18px/1 'Liberation Sans',sans-serif;color:#c4c4c4;white-space:nowrap;letter-spacing:0.6px;will-change:transform;">Mute Audio</div>
<div style="position:absolute;left:896.6px;top:782px;font:normal 18px/1 'Liberation Sans',sans-serif;color:#c4c4c4;white-space:nowrap;letter-spacing:0.6px;will-change:transform;">Stats</div>
<div style="position:absolute;left:954.6px;top:782px;font:normal 18px/1 'Liberation Sans',sans-serif;color:#c4c4c4;white-space:nowrap;letter-spacing:0.6px;will-change:transform;">Gizmos</div>
<div style="position:absolute;left:1024px;top:781px;width:1px;height:18px;background:#5a5a5a;"></div>
<svg style="position:absolute;left:1031.5px;top:787px;" width="11" height="6" viewBox="0 0 11 6"><polygon points="0,0 11,0 5.5,6" fill="#c4c4c4"/></svg>
<svg style="position:absolute;left:0px;top:806px;" width="1051" height="541" viewBox="0 0 1051 541"><defs><radialGradient id="gsky" gradientUnits="userSpaceOnUse" cx="525" cy="595.0" r="600.0" gradientTransform="translate(525 0) scale(7.0 1) translate(-525 0)"><stop offset="0" stop-color="#6a625c"/><stop offset="0.47" stop-color="#6a625d"/><stop offset="0.4883" stop-color="#6e6863"/><stop offset="0.5050" stop-color="#8f9392"/><stop offset="0.5267" stop-color="#c8dede"/><stop offset="0.5550" stop-color="#e0fbfd"/><stop offset="0.5767" stop-color="#d2f0fa"/><stop offset="0.6183" stop-color="#b4d4f0"/><stop offset="0.6600" stop-color="#94b4dc"/><stop offset="0.7300" stop-color="#7593c0"/><stop offset="0.8000" stop-color="#6580aa"/><stop offset="0.9050" stop-color="#55698f"/><stop offset="1.0000" stop-color="#5b7196"/><stop offset="1.1767" stop-color="#5b7196"/></radialGradient><linearGradient id="gedge" x1="0" y1="0" x2="1" y2="0"><stop offset="0" stop-color="#dcecff" stop-opacity="0.22"/><stop offset="0.45" stop-color="#dcecff" stop-opacity="0"/><stop offset="0.55" stop-color="#dcecff" stop-opacity="0"/><stop offset="1" stop-color="#dcecff" stop-opacity="0.14"/></linearGradient><linearGradient id="gedgeV" x1="0" y1="0" x2="0" y2="1"><stop offset="0" stop-color="#fff" stop-opacity="0.2"/><stop offset="0.5" stop-color="#fff" stop-opacity="1"/><stop offset="0.85" stop-color="#fff" stop-opacity="0.6"/><stop offset="1" stop-color="#fff" stop-opacity="0"/></linearGradient><mask id="gmask" maskUnits="userSpaceOnUse" x="0" y="0" width="1051" height="290"><rect width="1051" height="290" fill="url(#gedgeV)"/></mask></defs><rect width="1051" height="541" fill="url(#gsky)"/><rect width="1051" height="290" fill="url(#gedge)" mask="url(#gmask)"/><polygon points="370,302 681,302 992,365 60,365" fill="#ffffff"/></svg>
<div style="position:absolute;left:0px;top:1347px;width:2560px;height:33px;background:#191919;"></div>
<div style="position:absolute;left:1054px;top:109px;width:426px;height:29px;background:#282828;border-top-left-radius:6px;border-top-right-radius:6px;"></div>
<div style="position:absolute;left:1054px;top:109px;width:147px;height:29px;background:#3c3c3c;border-top-left-radius:6px;border-top-right-radius:6px;"></div>
<div style="position:absolute;left:1054px;top:109px;width:147px;height:3px;background:#3a72b0;border-top-left-radius:6px;border-top-right-radius:6px;"></div>
<svg style="position:absolute;left:1067px;top:117px;" width="16" height="13" viewBox="0 0 16 13"><circle cx="1.8" cy="1.8" r="1.6" fill="#c4c4c4"/><circle cx="4.8" cy="6.8" r="1.6" fill="#c4c4c4"/><circle cx="4.8" cy="11" r="1.6" fill="#c4c4c4"/><path d="M4 1.8 H15 M7 6.8 H15 M7 11 H15" stroke="#c4c4c4" stroke-width="1.4"/></svg>
<div style="position:absolute;left:1090px;top:116px;font:normal 18px/1 'Liberation Sans',sans-serif;color:#c4c4c4;white-space:nowrap;letter-spacing:0.6px;will-change:transform;">Hierarchy</div>
<svg style="position:absolute;left:1428px;top:116px;" width="14" height="15" viewBox="0 0 14 15"><path d="M3 7 V4.5 A3.5 3.5 0 0 1 10 4.5" fill="none" stroke="#c4c4c4" stroke-width="1.7"/><rect x="1.5" y="7.5" width="11" height="6.5" fill="none" stroke="#c4c4c4" stroke-width="1.7"/></svg>
<svg style="position:absolute;left:1459px;top:116px;" width="6" height="16" viewBox="0 0 6 16"><circle cx="3" cy="2.5" r="2.2" fill="#c4c4c4"/><circle cx="3" cy="8" r="2.2" fill="#c4c4c4"/><circle cx="3" cy="13.5" r="2.2" fill="#c4c4c4"/></svg>
<div style="position:absolute;left:1054px;top:138px;width:426px;height:31px;background:#3c3c3c;"></div>
<div style="position:absolute;left:1054px;top:168px;width:426px;height:1px;background:#2a2a2a;"></div>
<svg style="position:absolute;left:1065px;top:144px;" width="19" height="19" viewBox="0 0 19 19"><path d="M9.5 1 V18 M1 9.5 H18" stroke="#c4c4c4" stroke-width="2"/></svg>
<svg style="position:absolute;left:1089.5px;top:150px;" width="11" height="6" viewBox="0 0 11 6"><polygon points="0,0 11,0 5.5,6" fill="#c4c4c4"/></svg>
<div style="position:absolute;left:1119px;top:141px;width:357px;height:24px;box-sizing:border-box;background:#2a2a2a;border:1px solid #141414;border-radius:8px;"></div>
<svg style="position:absolute;left:1126px;top:147px;" width="16" height="12" viewBox="0 0 16 12"><circle cx="5" cy="5" r="3.3" fill="none" stroke="#c4c4c4" stroke-width="1.6"/><path d="M7.5 7.5 L10.5 10.5" stroke="#c4c4c4" stroke-width="1.8"/><polygon points="11,4 15,4 13,6.5" fill="#c4c4c4"/></svg>
<div style="position:absolute;left:1148px;top:144px;font:normal 18px/1 'Liberation Sans',sans-serif;color:#7a7a7a;white-space:nowrap;letter-spacing:0.5px;will-change:transform;">All</div>
<div style="position:absolute;left:1054px;top:169px;width:426px;height:1178px;background:#383838;"></div>
<div style="position:absolute;left:1054px;top:193px;width:48px;height:1154px;background:#2b2b2b;"></div>
<div style="position:absolute;left:1054px;top:169px;width:426px;height:24px;background:#4f4f4f;background:linear-gradient(#555555,#4c4c4c);"></div>
<svg style="position:absolute;left:1105px;top:176px;" width="13" height="11" viewBox="0 0 13 11"><polygon points="0,0 12,0 6,11" fill="#7c7c7c"/></svg>
<svg style="position:absolute;left:1123px;top:169px;" width="22" height="22" viewBox="0 0 22 22"><path d="M2 11 L17 2.3 Q20.8 11 17 19.7 Z M2 11 H13.3 L17 2.3 M13.3 11 L17 19.7" fill="none" stroke="#e2e2e2" stroke-width="1.6" stroke-linejoin="round"/></svg>
<div style="position:absolute;left:1152px;top:171px;font:bold 18px/1 'Liberation Sans',sans-serif;color:#dcdcdc;white-space:nowrap;letter-spacing:0.55px;will-change:transform;">SampleScene</div>
<svg style="position:absolute;left:1459px;top:177px;" width="6" height="16" viewBox="0 0 6 16"><circle cx="3" cy="2.5" r="2.2" fill="#c4c4c4"/><circle cx="3" cy="8" r="2.2" fill="#c4c4c4"/><circle cx="3" cy="13.5" r="2.2" fill="#c4c4c4"/></svg>
<div style="position:absolute;left:1054px;top:241px;width:426px;height:24px;background:#2c5d87;"></div>
<svg style="position:absolute;left:1145px;top:195px;" width="20" height="20" viewBox="0 0 20 20"><path d="M10 1.5 L18 5.5 V14.5 L10 18.5 L2 14.5 V5.5 Z M2 5.5 L10 9.5 L18 5.5 M10 9.5 V18.5" fill="none" stroke="#c4c4c4" stroke-width="1.3" stroke-linejoin="round"/></svg>
<div style="position:absolute;left:1171px;top:195px;font:normal 18px/1 'Liberation Sans',sans-serif;color:#c4c4c4;white-space:nowrap;letter-spacing:0.6px;will-change:transform;">Main Camera</div>
<svg style="position:absolute;left:1145px;top:219px;" width="20" height="20" viewBox="0 0 20 20"><path d="M10 1.5 L18 5.5 V14.5 L10 18.5 L2 14.5 V5.5 Z M2 5.5 L10 9.5 L18 5.5 M10 9.5 V18.5" fill="none" stroke="#c4c4c4" stroke-width="1.3" stroke-linejoin="round"/></svg>
<div style="position:absolute;left:1171px;top:219px;font:normal 18px/1 'Liberation Sans',sans-serif;color:#c4c4c4;white-space:nowrap;letter-spacing:0.6px;will-change:transform;">Directional Light</div>
<svg style="position:absolute;left:1145px;top:243px;" width="20" height="20" viewBox="0 0 20 20"><path d="M10 1.5 L18 5.5 V14.5 L10 18.5 L2 14.5 V5.5 Z M2 5.5 L10 9.5 L18 5.5 M10 9.5 V18.5" fill="none" stroke="#c4c4c4" stroke-width="1.3" stroke-linejoin="round"/></svg>
<div style="position:absolute;left:1171px;top:243px;font:normal 18px/1 'Liberation Sans',sans-serif;color:#ffffff;white-space:nowrap;letter-spacing:0.6px;will-change:transform;">Ground</div>
<div style="position:absolute;left:1480px;top:109px;width:3px;height:1238px;background:#191919;"></div>
<div style="position:absolute;left:1483px;top:109px;width:489px;height:29px;background:#282828;border-top-left-radius:6px;border-top-right-radius:6px;"></div>
<div style="position:absolute;left:1483px;top:109px;width:123px;height:29px;background:#3c3c3c;border-top-left-radius:6px;border-top-right-radius:6px;"></div>
<svg style="position:absolute;left:1494px;top:117px;" width="20" height="15" viewBox="0 0 20 15"><path d="M1 1 H8 L10 4 H19 V14 H1 Z" fill="#c4c4c4"/></svg>
<div style="position:absolute;left:1519px;top:116px;font:normal 18px/1 'Liberation Sans',sans-serif;color:#c4c4c4;white-space:nowrap;letter-spacing:0.6px;will-change:transform;">Project</div>
<svg style="position:absolute;left:1920px;top:116px;" width="14" height="15" viewBox="0 0 14 15"><path d="M3 7 V4.5 A3.5 3.5 0 0 1 10 4.5" fill="none" stroke="#c4c4c4" stroke-width="1.7"/><rect x="1.5" y="7.5" width="11" height="6.5" fill="none" stroke="#c4c4c4" stroke-width="1.7"/></svg>
<svg style="position:absolute;left:1950px;top:116px;" width="6" height="16" viewBox="0 0 6 16"><circle cx="3" cy="2.5" r="2.2" fill="#c4c4c4"/><circle cx="3" cy="8" r="2.2" fill="#c4c4c4"/><circle cx="3" cy="13.5" r="2.2" fill="#c4c4c4"/></svg>
<div style="position:absolute;left:1483px;top:138px;width:489px;height:31px;background:#3c3c3c;"></div>
<svg style="position:absolute;left:1493px;top:144px;" width="19" height="19" viewBox="0 0 19 19"><path d="M9.5 1 V18 M1 9.5 H18" stroke="#c4c4c4" stroke-width="2"/></svg>
<svg style="position:absolute;left:1518.5px;top:150px;" width="11" height="6" viewBox="0 0 11 6"><polygon points="0,0 11,0 5.5,6" fill="#c4c4c4"/></svg>
<div style="position:absolute;left:1551px;top:141px;width:240px;height:24px;box-sizing:border-box;background:#2a2a2a;border:1px solid #141414;border-radius:8px;"></div>
<svg style="position:absolute;left:1558px;top:147px;" width="12" height="12" viewBox="0 0 12 12"><circle cx="5" cy="5" r="3.3" fill="none" stroke="#c4c4c4" stroke-width="1.6"/><path d="M7.5 7.5 L10.5 10.5" stroke="#c4c4c4" stroke-width="1.8"/></svg>
<div style="position:absolute;left:1794px;top:138px;width:1px;height:30px;background:#282828;"></div>
<div style="position:absolute;left:1833px;top:138px;width:1px;height:30px;background:#282828;"></div>
<div style="position:absolute;left:1872px;top:138px;width:1px;height:30px;background:#282828;"></div>
<div style="position:absolute;left:1911px;top:138px;width:1px;height:30px;background:#282828;"></div>
<svg style="position:absolute;left:1803px;top:143px;" width="20" height="20" viewBox="0 0 20 20"><rect x="3" y="1" width="7" height="7" fill="#c4c4c4"/><circle cx="6" cy="14" r="5" fill="#c4c4c4"/><polygon points="13,3 19,12 9,12" fill="#c4c4c4"/></svg>
<svg style="position:absolute;left:1842px;top:144px;" width="18" height="18" viewBox="0 0 18 18"><path d="M10 1 H17 V8 L8 17 L1 10 Z" fill="#c4c4c4"/><circle cx="13.5" cy="4.5" r="1.6" fill="#3c3c3c"/></svg>
<svg style="position:absolute;left:1881px;top:144px;" width="19" height="18" viewBox="0 0 19 18"><polygon points="9.5,0.5 12,6.5 18.5,7 13.5,11 15,17.5 9.5,14 4,17.5 5.5,11 0.5,7 7,6.5" fill="#8f8f8f"/></svg>
<svg style="position:absolute;left:1919px;top:144px;" width="22" height="20" viewBox="0 0 22 20"><path d="M1.5 10 Q11 0 20.5 10 Q11 20 1.5 10 Z" fill="none" stroke="#c4c4c4" stroke-width="1.6"/><circle cx="11" cy="10" r="3.2" fill="none" stroke="#c4c4c4" stroke-width="1.6"/><path d="M2 18 L20 3" stroke="#c4c4c4" stroke-width="1.8"/></svg>
<div style="position:absolute;left:1940px;top:145px;font:normal 19px/1 'Liberation Sans',sans-serif;color:#c4c4c4;white-space:nowrap;will-change:transform;">10</div>
<div style="position:absolute;left:1483px;top:169px;width:165px;height:1178px;background:#383838;"></div>
<div style="position:absolute;left:1648px;top:169px;width:1px;height:1178px;background:#2a2a2a;"></div>
<svg style="position:absolute;left:1490px;top:175px;" width="12" height="11" viewBox="0 0 12 11"><polygon points="0,0 12,0 6,11" fill="#737373"/></svg>
<svg style="position:absolute;left:1509px;top:171px;" width="20" height="19" viewBox="0 0 20 19"><polygon points="10,1 12.6,7 19,7.3 14,11.4 15.7,18 10,14.3 4.3,18 6,11.4 1,7.3 7.4,7" fill="#f5b512"/></svg>
<div style="position:absolute;left:1537px;top:171px;font:bold 18px/1 'Liberation Sans',sans-serif;color:#d6d6d6;white-space:nowrap;letter-spacing:0.65px;will-change:transform;">Favorites</div>
<svg style="position:absolute;left:1531px;top:197px;" width="18" height="17" viewBox="0 0 18 17"><circle cx="7" cy="7" r="5.8" fill="none" stroke="#c4c4c4" stroke-width="1.5"/><path d="M11 11 L16 16" stroke="#c4c4c4" stroke-width="2.2"/></svg>
<div style="position:absolute;left:1555px;top:191px;width:93px;height:26px;overflow:hidden;font:normal 18px/1 'Liberation Sans',sans-serif;color:#c4c4c4;white-space:nowrap;letter-spacing:0.6px;padding-top:4px;box-sizing:border-box;will-change:transform;">All Materials</div>
<svg style="position:absolute;left:1531px;top:221px;" width="18" height="17" viewBox="0 0 18 17"><circle cx="7" cy="7" r="5.8" fill="none" stroke="#c4c4c4" stroke-width="1.5"/><path d="M11 11 L16 16" stroke="#c4c4c4" stroke-width="2.2"/></svg>
<div style="position:absolute;left:1555px;top:215px;width:93px;height:26px;overflow:hidden;font:normal 18px/1 'Liberation Sans',sans-serif;color:#c4c4c4;white-space:nowrap;letter-spacing:0.6px;padding-top:4px;box-sizing:border-box;will-change:transform;">All Models</div>
<svg style="position:absolute;left:1531px;top:245px;" width="18" height="17" viewBox="0 0 18 17"><circle cx="7" cy="7" r="5.8" fill="none" stroke="#c4c4c4" stroke-width="1.5"/><path d="M11 11 L16 16" stroke="#c4c4c4" stroke-width="2.2"/></svg>
<div style="position:absolute;left:1555px;top:239px;width:93px;height:26px;overflow:hidden;font:normal 18px/1 'Liberation Sans',sans-serif;color:#c4c4c4;white-space:nowrap;letter-spacing:0.6px;padding-top:4px;box-sizing:border-box;will-change:transform;">All Prefabs</div>
<div style="position:absolute;left:1483px;top:288px;width:165px;height:24px;background:#474747;"></div>
<svg style="position:absolute;left:1490px;top:295px;" width="12" height="11" viewBox="0 0 12 11"><polygon points="0,0 12,0 6,11" fill="#737373"/></svg>
<svg style="position:absolute;left:1509px;top:294px;" width="22" height="13" viewBox="0 0 22 13"><path d="M1 12 V1 H7 L9 3 H17 V5 H5 L1 12 Z" fill="#c4c4c4"/><path d="M1.5 12.5 L5 5.5 H21 L17.5 12.5 Z" fill="#c4c4c4"/></svg>
<div style="position:absolute;left:1537px;top:289px;font:bold 18px/1 'Liberation Sans',sans-serif;color:#d6d6d6;white-space:nowrap;letter-spacing:0.65px;will-change:transform;">Assets</div>
<svg style="position:absolute;left:1531px;top:316px;" width="19" height="15" viewBox="0 0 19 15"><path d="M1 1 H8 L10 4 H18 V14 H1 Z" fill="#c4c4c4"/></svg>
<div style="position:absolute;left:1555px;top:313.5px;font:normal 18px/1 'Liberation Sans',sans-serif;color:#c4c4c4;white-space:nowrap;letter-spacing:0.6px;will-change:transform;">Scenes</div>
<svg style="position:absolute;left:1491px;top:342px;" width="11" height="12" viewBox="0 0 11 12"><polygon points="0,0 11,6 0,12" fill="#737373"/></svg>
<svg style="position:absolute;left:1509px;top:340px;" width="19" height="15" viewBox="0 0 19 15"><path d="M1 1 H8 L10 4 H18 V14 H1 Z" fill="#c4c4c4"/></svg>
<div style="position:absolute;left:1537px;top:337px;font:bold 18px/1 'Liberation Sans',sans-serif;color:#d6d6d6;white-space:nowrap;letter-spacing:0.65px;will-change:transform;">Packages</div>
<div style="position:absolute;left:1649px;top:169px;width:323px;height:1178px;background:#333333;"></div>
<div style="position:absolute;left:1649px;top:169px;width:323px;height:31px;background:#3a3a3a;"></div>
<div style="position:absolute;left:1649px;top:199px;width:323px;height:1px;background:#2e2e2e;"></div>
<div style="position:absolute;left:1657px;top:176px;font:bold 18px/1 'Liberation Sans',sans-serif;color:#d6d6d6;white-space:nowrap;letter-spacing:0.65px;will-change:transform;">Assets</div>
<svg style="position:absolute;left:1683px;top:233px;" width="74" height="61" viewBox="0 0 74 61"><path d="M0 5 A5 5 0 0 1 5 0 H30 L38 12 H68 A5 5 0 0 1 73 17 V55 A5 5 0 0 1 68 60 H5 A5 5 0 0 1 0 55 Z" fill="#c2c2c2"/></svg>
<div style="position:absolute;left:1693px;top:315.5px;font:normal 15px/1 'Liberation Sans',sans-serif;color:#c4c4c4;white-space:nowrap;letter-spacing:0.6px;will-change:transform;">Scenes</div>
<div style="position:absolute;left:1649px;top:1318px;width:323px;height:29px;background:#3c3c3c;"></div>
<div style="position:absolute;left:1649px;top:1317px;width:323px;height:1px;background:#262626;"></div>
<div style="position:absolute;left:1865px;top:1330px;width:82px;height:3px;background:#5e5e5e;"></div>
<svg style="position:absolute;left:1904px;top:1323px;" width="16" height="16" viewBox="0 0 16 16"><circle cx="8" cy="8" r="7.5" fill="#b5b5b5"/></svg>
<div style="position:absolute;left:1972px;top:109px;width:3px;height:1238px;background:#191919;"></div>
<div style="position:absolute;left:1975px;top:109px;width:585px;height:29px;background:#282828;border-top-left-radius:6px;"></div>
<div style="position:absolute;left:1975px;top:109px;width:143px;height:29px;background:#3c3c3c;border-top-left-radius:6px;border-top-right-radius:6px;"></div>
<svg style="position:absolute;left:1988px;top:117px;" width="15" height="15" viewBox="0 0 15 15"><circle cx="7.5" cy="7.5" r="7.2" fill="#c4c4c4"/><rect x="6" y="6" width="3" height="6.5" fill="#3c3c3c"/><circle cx="7.5" cy="3.7" r="1.5" fill="#3c3c3c"/></svg>
<div style="position:absolute;left:2011px;top:116px;font:normal 18px/1 'Liberation Sans',sans-serif;color:#c4c4c4;white-space:nowrap;letter-spacing:0.6px;will-change:transform;">Inspector</div>
<svg style="position:absolute;left:2505px;top:116px;" width="14" height="15" viewBox="0 0 14 15"><path d="M3 7 V4.5 A3.5 3.5 0 0 1 10 4.5" fill="none" stroke="#c4c4c4" stroke-width="1.7"/><rect x="1.5" y="7.5" width="11" height="6.5" fill="none" stroke="#c4c4c4" stroke-width="1.7"/></svg>
<svg style="position:absolute;left:2537px;top:116px;" width="6" height="16" viewBox="0 0 6 16"><circle cx="3" cy="2.5" r="2.2" fill="#c4c4c4"/><circle cx="3" cy="8" r="2.2" fill="#c4c4c4"/><circle cx="3" cy="13.5" r="2.2" fill="#c4c4c4"/></svg>
<div style="position:absolute;left:1975px;top:137px;width:585px;height:2px;background:#1f1f1f;"></div>
<div style="position:absolute;left:1975px;top:139px;width:585px;height:1208px;background:#383838;"></div>
<div style="position:absolute;left:1975px;top:139px;width:585px;height:88px;background:#3e3e3e;"></div>
<svg style="position:absolute;left:1986px;top:153px;" width="32" height="32" viewBox="0 0 20 20"><path d="M10 1.5 L18 5.5 V14.5 L10 18.5 L2 14.5 V5.5 Z M2 5.5 L10 9.5 L18 5.5 M10 9.5 V18.5" fill="none" stroke="#c4c4c4" stroke-width="1.7" stroke-linejoin="round"/></svg>
<svg style="position:absolute;left:2015px;top:184px;" width="11" height="7" viewBox="0 0 11 7"><polygon points="0,0 11,0 5.5,7" fill="#c4c4c4"/></svg>
<div style="position:absolute;left:2045px;top:155px;width:21px;height:21px;box-sizing:border-box;background:#2a2a2a;border:1px solid #1e1e1e;border-radius:3px;"></div>
<svg style="position:absolute;left:2048px;top:159px;" width="15" height="13" viewBox="0 0 15 13"><path d="M1.5 6.5 L5.5 10.5 L13.5 2" fill="none" stroke="#e6e6e6" stroke-width="2.2"/></svg>
<div style="position:absolute;left:2075px;top:152px;width:378px;height:27px;box-sizing:border-box;background:#2a2a2a;border:1px solid #191919;border-radius:4px;"></div>
<div style="position:absolute;left:2079px;top:158px;font:bold 18px/1 'Liberation Sans',sans-serif;color:#d8d8d8;white-space:nowrap;letter-spacing:0.65px;will-change:transform;">Ground</div>
<div style="position:absolute;left:2457px;top:155px;width:21px;height:21px;box-sizing:border-box;background:#2a2a2a;border:1px solid #1e1e1e;border-radius:3px;"></div>
<div style="position:absolute;left:2484px;top:158px;font:normal 18px/1 'Liberation Sans',sans-serif;color:#c4c4c4;white-space:nowrap;letter-spacing:0.6px;will-change:transform;">Static</div>
<svg style="position:absolute;left:2539.5px;top:162px;" width="11" height="6" viewBox="0 0 11 6"><polygon points="0,0 11,0 5.5,6" fill="#c4c4c4"/></svg>
<div style="position:absolute;left:2040px;top:193px;font:normal 18px/1 'Liberation Sans',sans-serif;color:#c4c4c4;white-space:nowrap;letter-spacing:0.6px;will-change:transform;">Tag</div>
<div style="position:absolute;left:2079px;top:189px;width:207px;height:26px;box-sizing:border-box;background:#515151;border:1px solid #303030;border-radius:4px;"></div>
<div style="position:absolute;left:2084px;top:193px;font:normal 18px/1 'Liberation Sans',sans-serif;color:#c4c4c4;white-space:nowrap;letter-spacing:0.6px;will-change:transform;">Untagged</div>
<svg style="position:absolute;left:2267.5px;top:199px;" width="11" height="6" viewBox="0 0 11 6"><polygon points="0,0 11,0 5.5,6" fill="#c4c4c4"/></svg>
<div style="position:absolute;left:2306px;top:193px;font:normal 18px/1 'Liberation Sans',sans-serif;color:#c4c4c4;white-space:nowrap;letter-spacing:0.6px;will-change:transform;">Layer</div>
<div style="position:absolute;left:2363px;top:189px;width:189px;height:26px;box-sizing:border-box;background:#515151;border:1px solid #303030;border-radius:4px;"></div>
<div style="position:absolute;left:2368px;top:193px;font:normal 18px/1 'Liberation Sans',sans-serif;color:#c4c4c4;white-space:nowrap;letter-spacing:0.6px;will-change:transform;">Default</div>
<svg style="position:absolute;left:2533.5px;top:199px;" width="11" height="6" viewBox="0 0 11 6"><polygon points="0,0 11,0 5.5,6" fill="#c4c4c4"/></svg>
<div style="position:absolute;left:1975px;top:226px;width:585px;height:2px;background:#232323;"></div>
<div style="position:absolute;left:1975px;top:228px;width:585px;height:31px;background:#3e3e3e;"></div>
<div style="position:absolute;left:1975px;top:258px;width:585px;height:1px;background:#303030;"></div>
<svg style="position:absolute;left:1986px;top:238px;" width="13" height="11" viewBox="0 0 13 11"><polygon points="0,0 12,0 6,11" fill="#8a8a8a"/></svg>
<svg style="position:absolute;left:2007px;top:234px;" width="22" height="20" viewBox="0 0 22 20"><path d="M10.5 2 V11" stroke="#8fe048" stroke-width="3" stroke-linecap="round"/><path d="M10 11 L3 16" stroke="#58b4ef" stroke-width="3" stroke-linecap="round"/><path d="M11 11 L18.5 15.5" stroke="#ef6a3c" stroke-width="3" stroke-linecap="round"/></svg>
<div style="position:absolute;left:2067px;top:235px;font:bold 18px/1 'Liberation Sans',sans-serif;color:#d2d2d2;white-space:nowrap;letter-spacing:0.65px;will-change:transform;">Transform</div>
<svg style="position:absolute;left:2472px;top:236px;" width="16" height="16" viewBox="0 0 16 16"><circle cx="8" cy="8" r="7.5" fill="#c4c4c4"/><path d="M5.5 6 A2.6 2.6 0 1 1 8.8 8.4 Q8 8.8 8 10" fill="none" stroke="#3e3e3e" stroke-width="2"/><circle cx="8" cy="12.6" r="1.2" fill="#3e3e3e"/></svg>
<svg style="position:absolute;left:2501px;top:236px;" width="18" height="16" viewBox="0 0 18 16"><path d="M1 5 H17 M1 11 H17" stroke="#c4c4c4" stroke-width="1.6"/><path d="M12 1.5 V8 M6 8 V14.5" stroke="#c4c4c4" stroke-width="1.8"/></svg>
<svg style="position:absolute;left:2537px;top:236px;" width="6" height="16" viewBox="0 0 6 16"><circle cx="3" cy="2.5" r="2.2" fill="#c4c4c4"/><circle cx="3" cy="8" r="2.2" fill="#c4c4c4"/><circle cx="3" cy="13.5" r="2.2" fill="#c4c4c4"/></svg>
<div style="position:absolute;left:2004px;top:272px;font:normal 18px/1 'Liberation Sans',sans-serif;color:#c4c4c4;white-space:nowrap;letter-spacing:0.6px;will-change:transform;">Position</div>
<div style="position:absolute;left:2211px;top:272px;font:normal 18px/1 'Liberation Sans',sans-serif;color:#c4c4c4;white-space:nowrap;will-change:transform;">X</div>
<div style="position:absolute;left:2228px;top:267px;width:92px;height:26px;box-sizing:border-box;background:#2a2a2a;border:1px solid #212121;border-radius:4px;"></div>
<div style="position:absolute;left:2232px;top:272px;font:normal 18px/1 'Liberation Sans',sans-serif;color:#c4c4c4;white-space:nowrap;will-change:transform;">0</div>
<div style="position:absolute;left:2329px;top:272px;font:normal 18px/1 'Liberation Sans',sans-serif;color:#c4c4c4;white-space:nowrap;will-change:transform;">Y</div>
<div style="position:absolute;left:2344px;top:267px;width:92px;height:26px;box-sizing:border-box;background:#2a2a2a;border:1px solid #212121;border-radius:4px;"></div>
<div style="position:absolute;left:2348px;top:272px;font:normal 18px/1 'Liberation Sans',sans-serif;color:#c4c4c4;white-space:nowrap;will-change:transform;">0</div>
<div style="position:absolute;left:2445px;top:272px;font:normal 18px/1 'Liberation Sans',sans-serif;color:#c4c4c4;white-space:nowrap;will-change:transform;">Z</div>
<div style="position:absolute;left:2461px;top:267px;width:92px;height:26px;box-sizing:border-box;background:#2a2a2a;border:1px solid #212121;border-radius:4px;"></div>
<div style="position:absolute;left:2465px;top:272px;font:normal 18px/1 'Liberation Sans',sans-serif;color:#c4c4c4;white-space:nowrap;will-change:transform;">0</div>
<div style="position:absolute;left:2004px;top:302px;font:normal 18px/1 'Liberation Sans',sans-serif;color:#c4c4c4;white-space:nowrap;letter-spacing:0.6px;will-change:transform;">Rotation</div>
<div style="position:absolute;left:2211px;top:302px;font:normal 18px/1 'Liberation Sans',sans-serif;color:#c4c4c4;white-space:nowrap;will-change:transform;">X</div>
<div style="position:absolute;left:2228px;top:297px;width:92px;height:26px;box-sizing:border-box;background:#2a2a2a;border:1px solid #212121;border-radius:4px;"></div>
<div style="position:absolute;left:2232px;top:302px;font:normal 18px/1 'Liberation Sans',sans-serif;color:#c4c4c4;white-space:nowrap;will-change:transform;">0</div>
<div style="position:absolute;left:2329px;top:302px;font:normal 18px/1 'Liberation Sans',sans-serif;color:#c4c4c4;white-space:nowrap;will-change:transform;">Y</div>
<div style="position:absolute;left:2344px;top:297px;width:92px;height:26px;box-sizing:border-box;background:#2a2a2a;border:1px solid #212121;border-radius:4px;"></div>
<div style="position:absolute;left:2348px;top:302px;font:normal 18px/1 'Liberation Sans',sans-serif;color:#c4c4c4;white-space:nowrap;will-change:transform;">0</div>
<div style="position:absolute;left:2445px;top:302px;font:normal 18px/1 'Liberation Sans',sans-serif;color:#c4c4c4;white-space:nowrap;will-change:transform;">Z</div>
<div style="position:absolute;left:2461px;top:297px;width:92px;height:26px;box-sizing:border-box;background:#2a2a2a;border:1px solid #212121;border-radius:4px;"></div>
<div style="position:absolute;left:2465px;top:302px;font:normal 18px/1 'Liberation Sans',sans-serif;color:#c4c4c4;white-space:nowrap;will-change:transform;">0</div>
<div style="position:absolute;left:2004px;top:332px;font:normal 18px/1 'Liberation Sans',sans-serif;color:#c4c4c4;white-space:nowrap;letter-spacing:0.6px;will-change:transform;">Scale</div>
<div style="position:absolute;left:2211px;top:332px;font:normal 18px/1 'Liberation Sans',sans-serif;color:#c4c4c4;white-space:nowrap;will-change:transform;">X</div>
<div style="position:absolute;left:2228px;top:327px;width:92px;height:26px;box-sizing:border-box;background:#2a2a2a;border:1px solid #212121;border-radius:4px;"></div>
<div style="position:absolute;left:2232px;top:332px;font:normal 18px/1 'Liberation Sans',sans-serif;color:#c4c4c4;white-space:nowrap;will-change:transform;">1</div>
<div style="position:absolute;left:2329px;top:332px;font:normal 18px/1 'Liberation Sans',sans-serif;color:#c4c4c4;white-space:nowrap;will-change:transform;">Y</div>
<div style="position:absolute;left:2344px;top:327px;width:92px;height:26px;box-sizing:border-box;background:#2a2a2a;border:1px solid #212121;border-radius:4px;"></div>
<div style="position:absolute;left:2348px;top:332px;font:normal 18px/1 'Liberation Sans',sans-serif;color:#c4c4c4;white-space:nowrap;will-change:transform;">1</div>
<div style="position:absolute;left:2445px;top:332px;font:normal 18px/1 'Liberation Sans',sans-serif;color:#c4c4c4;white-space:nowrap;will-change:transform;">Z</div>
<div style="position:absolute;left:2461px;top:327px;width:92px;height:26px;box-sizing:border-box;background:#2a2a2a;border:1px solid #212121;border-radius:4px;"></div>
<div style="position:absolute;left:2465px;top:332px;font:normal 18px/1 'Liberation Sans',sans-serif;color:#c4c4c4;white-space:nowrap;will-change:transform;">1</div>
<div style="position:absolute;left:1975px;top:366px;width:585px;height:2px;background:#232323;"></div>
<div style="position:absolute;left:1975px;top:368px;width:585px;height:31px;background:#3e3e3e;"></div>
<div style="position:absolute;left:1975px;top:398px;width:585px;height:1px;background:#303030;"></div>
<svg style="position:absolute;left:1986px;top:378px;" width="13" height="11" viewBox="0 0 13 11"><polygon points="0,0 12,0 6,11" fill="#8a8a8a"/></svg>
<svg style="position:absolute;left:2007px;top:374px;" width="20" height="20" viewBox="0 0 20 20"><path d="M1 1 H19 V19 H1 Z M7 1 V19 M13 1 V19 M1 7 H19 M1 13 H19" fill="none" stroke="#58b4ef" stroke-width="1.6"/></svg>
<div style="position:absolute;left:2067px;top:375px;font:bold 18px/1 'Liberation Sans',sans-serif;color:#d2d2d2;white-space:nowrap;letter-spacing:0.65px;will-change:transform;">Plane (Mesh Filter)</div>
<svg style="position:absolute;left:2472px;top:376px;" width="16" height="16" viewBox="0 0 16 16"><circle cx="8" cy="8" r="7.5" fill="#c4c4c4"/><path d="M5.5 6 A2.6 2.6 0 1 1 8.8 8.4 Q8 8.8 8 10" fill="none" stroke="#3e3e3e" stroke-width="2"/><circle cx="8" cy="12.6" r="1.2" fill="#3e3e3e"/></svg>
<svg style="position:absolute;left:2501px;top:376px;" width="18" height="16" viewBox="0 0 18 16"><path d="M1 5 H17 M1 11 H17" stroke="#c4c4c4" stroke-width="1.6"/><path d="M12 1.5 V8 M6 8 V14.5" stroke="#c4c4c4" stroke-width="1.8"/></svg>
<svg style="position:absolute;left:2537px;top:376px;" width="6" height="16" viewBox="0 0 6 16"><circle cx="3" cy="2.5" r="2.2" fill="#c4c4c4"/><circle cx="3" cy="8" r="2.2" fill="#c4c4c4"/><circle cx="3" cy="13.5" r="2.2" fill="#c4c4c4"/></svg>
<div style="position:absolute;left:2004px;top:411px;font:normal 18px/1 'Liberation Sans',sans-serif;color:#c4c4c4;white-space:nowrap;letter-spacing:0.6px;will-change:transform;">Mesh</div>
<div style="position:absolute;left:2210px;top:406px;width:343px;height:27px;box-sizing:border-box;background:#2a2a2a;border:1px solid #212121;border-radius:4px;"></div>
<div style="position:absolute;left:2524px;top:407px;width:28px;height:25px;background:#303030;border-radius:0 3px 3px 0;"></div>
<svg style="position:absolute;left:2531px;top:411px;" width="16" height="16" viewBox="0 0 16 16"><circle cx="8" cy="8" r="6.5" fill="none" stroke="#c4c4c4" stroke-width="1.5"/><circle cx="8" cy="8" r="2.3" fill="#c4c4c4"/></svg>
<svg style="position:absolute;left:2215px;top:412px;" width="16" height="16" viewBox="0 0 16 16"><path d="M0.75 0.75 H15.25 V15.25 H0.75 Z M5.5 0.75 V15.25 M10.5 0.75 V15.25 M0.75 5.5 H15.25 M0.75 10.5 H15.25" fill="none" stroke="#5ab0e8" stroke-width="1.4"/></svg>
<div style="position:absolute;left:2233px;top:411px;font:normal 18px/1 'Liberation Sans',sans-serif;color:#c4c4c4;white-space:nowrap;letter-spacing:0.6px;will-change:transform;">Plane</div>
<div style="position:absolute;left:1975px;top:446px;width:585px;height:2px;background:#232323;"></div>
<div style="position:absolute;left:1975px;top:448px;width:585px;height:30px;background:#3e3e3e;"></div>
<div style="position:absolute;left:1975px;top:477px;width:585px;height:1px;background:#303030;"></div>
<svg style="position:absolute;left:1986px;top:458px;" width="13" height="11" viewBox="0 0 13 11"><polygon points="0,0 12,0 6,11" fill="#8a8a8a"/></svg>
<svg style="position:absolute;left:2007px;top:453px;" width="20" height="20" viewBox="0 0 20 20"><path d="M1 1 H19 V19 H1 Z M7 1 V19 M13 1 V19 M1 7 H19 M1 13 H19" fill="none" stroke="#58b4ef" stroke-width="1.6"/></svg>
<svg style="position:absolute;left:2013px;top:465px;" width="16" height="10" viewBox="0 0 16 10"><ellipse cx="8" cy="5" rx="7.5" ry="4.5" fill="#3e3e3e" stroke="#c4c4c4" stroke-width="1.5"/><circle cx="8" cy="5" r="2" fill="#c4c4c4"/></svg>
<div style="position:absolute;left:2037px;top:453px;width:21px;height:21px;box-sizing:border-box;background:#2a2a2a;border:1px solid #1e1e1e;border-radius:3px;"></div>
<svg style="position:absolute;left:2040px;top:457px;" width="15" height="13" viewBox="0 0 15 13"><path d="M1.5 6.5 L5.5 10.5 L13.5 2" fill="none" stroke="#e6e6e6" stroke-width="2.2"/></svg>
<div style="position:absolute;left:2067px;top:455px;font:bold 18px/1 'Liberation Sans',sans-serif;color:#d2d2d2;white-space:nowrap;letter-spacing:0.65px;will-change:transform;">Mesh Renderer</div>
<svg style="position:absolute;left:2472px;top:456px;" width="16" height="16" viewBox="0 0 16 16"><circle cx="8" cy="8" r="7.5" fill="#c4c4c4"/><path d="M5.5 6 A2.6 2.6 0 1 1 8.8 8.4 Q8 8.8 8 10" fill="none" stroke="#3e3e3e" stroke-width="2"/><circle cx="8" cy="12.6" r="1.2" fill="#3e3e3e"/></svg>
<svg style="position:absolute;left:2501px;top:456px;" width="18" height="16" viewBox="0 0 18 16"><path d="M1 5 H17 M1 11 H17" stroke="#c4c4c4" stroke-width="1.6"/><path d="M12 1.5 V8 M6 8 V14.5" stroke="#c4c4c4" stroke-width="1.8"/></svg>
<svg style="position:absolute;left:2537px;top:456px;" width="6" height="16" viewBox="0 0 6 16"><circle cx="3" cy="2.5" r="2.2" fill="#c4c4c4"/><circle cx="3" cy="8" r="2.2" fill="#c4c4c4"/><circle cx="3" cy="13.5" r="2.2" fill="#c4c4c4"/></svg>
<svg style="position:absolute;left:1986px;top:492px;" width="11" height="13" viewBox="0 0 11 13"><polygon points="0,0 11,6.5 0,13" fill="#8a8a8a"/></svg>
<div style="position:absolute;left:2006px;top:491px;font:bold 18px/1 'Liberation Sans',sans-serif;color:#d2d2d2;white-space:nowrap;letter-spacing:0.65px;will-change:transform;">Materials</div>
<div style="position:absolute;left:2482px;top:485px;width:71px;height:27px;box-sizing:border-box;background:#2a2a2a;border:1px solid #212121;border-radius:4px;"></div>
<div style="position:absolute;left:2486px;top:491px;font:normal 18px/1 'Liberation Sans',sans-serif;color:#c4c4c4;white-space:nowrap;will-change:transform;">1</div>
<svg style="position:absolute;left:1986px;top:524px;" width="13" height="11" viewBox="0 0 13 11"><polygon points="0,0 12,0 6,11" fill="#8a8a8a"/></svg>
<div style="position:absolute;left:2006px;top:521px;font:bold 18px/1 'Liberation Sans',sans-serif;color:#d2d2d2;white-space:nowrap;letter-spacing:0.65px;will-change:transform;">Lighting</div>
<div style="position:absolute;left:2027px;top:550px;font:normal 18px/1 'Liberation Sans',sans-serif;color:#c4c4c4;white-space:nowrap;letter-spacing:0.6px;will-change:transform;">Cast Shadows</div>
<div style="position:absolute;left:2211px;top:546px;width:342px;height:26px;box-sizing:border-box;background:#515151;border:1px solid #303030;border-radius:4px;"></div>
<div style="position:absolute;left:2216px;top:550px;font:normal 18px/1 'Liberation Sans',sans-serif;color:#c4c4c4;white-space:nowrap;letter-spacing:0.6px;will-change:transform;">On</div>
<svg style="position:absolute;left:2534.5px;top:556px;" width="11" height="6" viewBox="0 0 11 6"><polygon points="0,0 11,0 5.5,6" fill="#c4c4c4"/></svg>
<div style="position:absolute;left:2027px;top:580px;font:normal 18px/1 'Liberation Sans',sans-serif;color:#c4c4c4;white-space:nowrap;letter-spacing:0.6px;will-change:transform;">Receive Shadows</div>
<div style="position:absolute;left:2210px;top:578px;width:21px;height:21px;box-sizing:border-box;background:#2a2a2a;border:1px solid #1e1e1e;border-radius:3px;"></div>
<svg style="position:absolute;left:2213px;top:582px;" width="15" height="13" viewBox="0 0 15 13"><path d="M1.5 6.5 L5.5 10.5 L13.5 2" fill="none" stroke="#e6e6e6" stroke-width="2.2"/></svg>
<div style="position:absolute;left:2027px;top:606px;width:181px;height:26px;overflow:hidden;font:normal 18px/1 'Liberation Sans',sans-serif;color:#c4c4c4;white-space:nowrap;letter-spacing:0.6px;padding-top:4px;box-sizing:border-box;will-change:transform;">Contribute Global Illumination</div>
<div style="position:absolute;left:2210px;top:608px;width:21px;height:21px;box-sizing:border-box;background:#2a2a2a;border:1px solid #1e1e1e;border-radius:3px;"></div>
<div style="position:absolute;left:2027px;top:636px;width:181px;height:26px;overflow:hidden;font:normal 18px/1 'Liberation Sans',sans-serif;color:#7d7d7d;white-space:nowrap;letter-spacing:0.6px;padding-top:4px;box-sizing:border-box;will-change:transform;">Receive Global Illumination</div>
<div style="position:absolute;left:2211px;top:637px;width:342px;height:26px;box-sizing:border-box;background:#474747;border:1px solid #303030;border-radius:4px;"></div>
<div style="position:absolute;left:2216px;top:641px;font:normal 18px/1 'Liberation Sans',sans-serif;color:#7d7d7d;white-space:nowrap;letter-spacing:0.6px;will-change:transform;">Light Probes</div>
<svg style="position:absolute;left:2534.5px;top:647px;" width="11" height="6" viewBox="0 0 11 6"><polygon points="0,0 11,0 5.5,6" fill="#7d7d7d"/></svg>
<svg style="position:absolute;left:1986px;top:674px;" width="13" height="11" viewBox="0 0 13 11"><polygon points="0,0 12,0 6,11" fill="#8a8a8a"/></svg>
<div style="position:absolute;left:2006px;top:671px;font:bold 18px/1 'Liberation Sans',sans-serif;color:#d2d2d2;white-space:nowrap;letter-spacing:0.65px;will-change:transform;">Probes</div>
<div style="position:absolute;left:2027px;top:700px;font:normal 18px/1 'Liberation Sans',sans-serif;color:#c4c4c4;white-space:nowrap;letter-spacing:0.6px;will-change:transform;">Light Probes</div>
<div style="position:absolute;left:2211px;top:696px;width:342px;height:26px;box-sizing:border-box;background:#515151;border:1px solid #303030;border-radius:4px;"></div>
<div style="position:absolute;left:2216px;top:700px;font:normal 18px/1 'Liberation Sans',sans-serif;color:#c4c4c4;white-space:nowrap;letter-spacing:0.6px;will-change:transform;">Blend Probes</div>
<svg style="position:absolute;left:2534.5px;top:706px;" width="11" height="6" viewBox="0 0 11 6"><polygon points="0,0 11,0 5.5,6" fill="#c4c4c4"/></svg>
<div style="position:absolute;left:2027px;top:730px;font:normal 18px/1 'Liberation Sans',sans-serif;color:#c4c4c4;white-space:nowrap;letter-spacing:0.6px;will-change:transform;">Reflection Probes</div>
<div style="position:absolute;left:2211px;top:726px;width:342px;height:26px;box-sizing:border-box;background:#515151;border:1px solid #303030;border-radius:4px;"></div>
<div style="position:absolute;left:2216px;top:730px;font:normal 18px/1 'Liberation Sans',sans-serif;color:#c4c4c4;white-space:nowrap;letter-spacing:0.6px;will-change:transform;">Blend Probes</div>
<svg style="position:absolute;left:2534.5px;top:736px;" width="11" height="6" viewBox="0 0 11 6"><polygon points="0,0 11,0 5.5,6" fill="#c4c4c4"/></svg>
<div style="position:absolute;left:2027px;top:760px;font:normal 18px/1 'Liberation Sans',sans-serif;color:#c4c4c4;white-space:nowrap;letter-spacing:0.6px;will-change:transform;">Anchor Override</div>
<div style="position:absolute;left:2210px;top:756px;width:343px;height:26px;box-sizing:border-box;background:#2a2a2a;border:1px solid #212121;border-radius:4px;"></div>
<div style="position:absolute;left:2524px;top:757px;width:28px;height:24px;background:#303030;border-radius:0 3px 3px 0;"></div>
<svg style="position:absolute;left:2531px;top:761px;" width="16" height="16" viewBox="0 0 16 16"><circle cx="8" cy="8" r="6.5" fill="none" stroke="#c4c4c4" stroke-width="1.5"/><circle cx="8" cy="8" r="2.3" fill="#c4c4c4"/></svg>
<div style="position:absolute;left:2213px;top:761px;font:normal 18px/1 'Liberation Sans',sans-serif;color:#c4c4c4;white-space:nowrap;letter-spacing:0.6px;will-change:transform;">None (Transform)</div>
<svg style="position:absolute;left:1986px;top:794px;" width="13" height="11" viewBox="0 0 13 11"><polygon points="0,0 12,0 6,11" fill="#8a8a8a"/></svg>
<div style="position:absolute;left:2006px;top:791px;font:bold 18px/1 'Liberation Sans',sans-serif;color:#d2d2d2;white-space:nowrap;letter-spacing:0.65px;will-change:transform;">Additional Settings</div>
<div style="position:absolute;left:2027px;top:820px;font:normal 18px/1 'Liberation Sans',sans-serif;color:#c4c4c4;white-space:nowrap;letter-spacing:0.6px;will-change:transform;">Motion Vectors</div>
<div style="position:absolute;left:2211px;top:816px;width:342px;height:26px;box-sizing:border-box;background:#515151;border:1px solid #303030;border-radius:4px;"></div>
<div style="position:absolute;left:2216px;top:820px;font:normal 18px/1 'Liberation Sans',sans-serif;color:#c4c4c4;white-space:nowrap;letter-spacing:0.6px;will-change:transform;">Per Object Motion</div>
<svg style="position:absolute;left:2534.5px;top:826px;" width="11" height="6" viewBox="0 0 11 6"><polygon points="0,0 11,0 5.5,6" fill="#c4c4c4"/></svg>
<div style="position:absolute;left:2027px;top:850px;font:normal 18px/1 'Liberation Sans',sans-serif;color:#c4c4c4;white-space:nowrap;letter-spacing:0.6px;will-change:transform;">Dynamic Occlusion</div>
<div style="position:absolute;left:2210px;top:848px;width:21px;height:21px;box-sizing:border-box;background:#2a2a2a;border:1px solid #1e1e1e;border-radius:3px;"></div>
<svg style="position:absolute;left:2213px;top:852px;" width="15" height="13" viewBox="0 0 15 13"><path d="M1.5 6.5 L5.5 10.5 L13.5 2" fill="none" stroke="#e6e6e6" stroke-width="2.2"/></svg>
<div style="position:absolute;left:1975px;top:884px;width:585px;height:2px;background:#232323;"></div>
<div style="position:absolute;left:1975px;top:886px;width:585px;height:32px;background:#3e3e3e;"></div>
<div style="position:absolute;left:1975px;top:917px;width:585px;height:1px;background:#303030;"></div>
<svg style="position:absolute;left:1986px;top:896px;" width="13" height="11" viewBox="0 0 13 11"><polygon points="0,0 12,0 6,11" fill="#8a8a8a"/></svg>
<svg style="position:absolute;left:2007px;top:892px;" width="20" height="20" viewBox="0 0 20 20"><path d="M1 1 H19 V19 H1 Z M7 1 V19 M13 1 V19 M1 7 H19 M1 13 H19" fill="none" stroke="#8ee63c" stroke-width="1.6"/></svg>
<div style="position:absolute;left:2037px;top:891px;width:21px;height:21px;box-sizing:border-box;background:#2a2a2a;border:1px solid #1e1e1e;border-radius:3px;"></div>
<svg style="position:absolute;left:2040px;top:895px;" width="15" height="13" viewBox="0 0 15 13"><path d="M1.5 6.5 L5.5 10.5 L13.5 2" fill="none" stroke="#e6e6e6" stroke-width="2.2"/></svg>
<div style="position:absolute;left:2067px;top:893px;font:bold 18px/1 'Liberation Sans',sans-serif;color:#d2d2d2;white-space:nowrap;letter-spacing:0.65px;will-change:transform;">Mesh Collider</div>
<svg style="position:absolute;left:2472px;top:894px;" width="16" height="16" viewBox="0 0 16 16"><circle cx="8" cy="8" r="7.5" fill="#c4c4c4"/><path d="M5.5 6 A2.6 2.6 0 1 1 8.8 8.4 Q8 8.8 8 10" fill="none" stroke="#3e3e3e" stroke-width="2"/><circle cx="8" cy="12.6" r="1.2" fill="#3e3e3e"/></svg>
<svg style="position:absolute;left:2501px;top:894px;" width="18" height="16" viewBox="0 0 18 16"><path d="M1 5 H17 M1 11 H17" stroke="#c4c4c4" stroke-width="1.6"/><path d="M12 1.5 V8 M6 8 V14.5" stroke="#c4c4c4" stroke-width="1.8"/></svg>
<svg style="position:absolute;left:2537px;top:894px;" width="6" height="16" viewBox="0 0 6 16"><circle cx="3" cy="2.5" r="2.2" fill="#c4c4c4"/><circle cx="3" cy="8" r="2.2" fill="#c4c4c4"/><circle cx="3" cy="13.5" r="2.2" fill="#c4c4c4"/></svg>
<div style="position:absolute;left:2004px;top:929px;font:normal 18px/1 'Liberation Sans',sans-serif;color:#c4c4c4;white-space:nowrap;letter-spacing:0.6px;will-change:transform;">Convex</div>
<div style="position:absolute;left:2210px;top:927px;width:21px;height:21px;box-sizing:border-box;background:#2a2a2a;border:1px solid #1e1e1e;border-radius:3px;"></div>
<div style="position:absolute;left:2027px;top:958px;font:normal 18px/1 'Liberation Sans',sans-serif;color:#7d7d7d;white-space:nowrap;letter-spacing:0.6px;will-change:transform;">Is Trigger</div>
<div style="position:absolute;left:2210px;top:957px;width:21px;height:21px;box-sizing:border-box;background:#323232;border:1px solid #2a2a2a;border-radius:3px;"></div>
<div style="position:absolute;left:2004px;top:1019px;font:normal 18px/1 'Liberation Sans',sans-serif;color:#c4c4c4;white-space:nowrap;letter-spacing:0.6px;will-change:transform;">Cooking Options</div>
<div style="position:absolute;left:2211px;top:1015px;width:342px;height:26px;box-sizing:border-box;background:#515151;border:1px solid #303030;border-radius:4px;"></div>
<div style="position:absolute;left:2216px;top:1019px;font:normal 18px/1 'Liberation Sans',sans-serif;color:#c4c4c4;white-space:nowrap;letter-spacing:0.6px;will-change:transform;">Mixed...</div>
<svg style="position:absolute;left:2534.5px;top:1025px;" width="11" height="6" viewBox="0 0 11 6"><polygon points="0,0 11,0 5.5,6" fill="#c4c4c4"/></svg>
<div style="position:absolute;left:2004px;top:1049px;font:normal 18px/1 'Liberation Sans',sans-serif;color:#c4c4c4;white-space:nowrap;letter-spacing:0.6px;will-change:transform;">Material</div>
<div style="position:absolute;left:2210px;top:1045px;width:343px;height:26px;box-sizing:border-box;background:#2a2a2a;border:1px solid #212121;border-radius:4px;"></div>
<div style="position:absolute;left:2524px;top:1046px;width:28px;height:24px;background:#303030;border-radius:0 3px 3px 0;"></div>
<svg style="position:absolute;left:2531px;top:1050px;" width="16" height="16" viewBox="0 0 16 16"><circle cx="8" cy="8" r="6.5" fill="none" stroke="#c4c4c4" stroke-width="1.5"/><circle cx="8" cy="8" r="2.3" fill="#c4c4c4"/></svg>
<div style="position:absolute;left:2213px;top:1050px;font:normal 18px/1 'Liberation Sans',sans-serif;color:#c4c4c4;white-space:nowrap;letter-spacing:0.6px;will-change:transform;">None (Physic Material)</div>
<div style="position:absolute;left:2004px;top:1079px;font:normal 18px/1 'Liberation Sans',sans-serif;color:#c4c4c4;white-space:nowrap;letter-spacing:0.6px;will-change:transform;">Mesh</div>
<div style="position:absolute;left:2210px;top:1074px;width:343px;height:27px;box-sizing:border-box;background:#2a2a2a;border:1px solid #212121;border-radius:4px;"></div>
<div style="position:absolute;left:2524px;top:1075px;width:28px;height:25px;background:#303030;border-radius:0 3px 3px 0;"></div>
<svg style="position:absolute;left:2531px;top:1079px;" width="16" height="16" viewBox="0 0 16 16"><circle cx="8" cy="8" r="6.5" fill="none" stroke="#c4c4c4" stroke-width="1.5"/><circle cx="8" cy="8" r="2.3" fill="#c4c4c4"/></svg>
<svg style="position:absolute;left:2215px;top:1080px;" width="16" height="16" viewBox="0 0 16 16"><path d="M0.75 0.75 H15.25 V15.25 H0.75 Z M5.5 0.75 V15.25 M10.5 0.75 V15.25 M0.75 5.5 H15.25 M0.75 10.5 H15.25" fill="none" stroke="#5ab0e8" stroke-width="1.4"/></svg>
<div style="position:absolute;left:2233px;top:1079px;font:normal 18px/1 'Liberation Sans',sans-serif;color:#c4c4c4;white-space:nowrap;letter-spacing:0.6px;will-change:transform;">Plane</div>
<div style="position:absolute;left:1975px;top:1113px;width:585px;height:3px;background:#1e1e1e;"></div>
<div style="position:absolute;left:1975px;top:1116px;width:585px;height:82px;background:#3e3e3e;"></div>
<svg style="position:absolute;left:2001px;top:1125px;" width="46" height="46" viewBox="0 0 46 46"><defs><radialGradient id="sph" cx="0.33" cy="0.3" r="0.75"><stop offset="0" stop-color="#ffffff"/><stop offset="0.2" stop-color="#d8dcdc"/><stop offset="0.7" stop-color="#7d8282"/><stop offset="1" stop-color="#3c3f3f"/></radialGradient></defs><circle cx="23" cy="23" r="22" fill="url(#sph)"/></svg>
<div style="position:absolute;left:2060px;top:1125px;font:normal 20px/1 'Liberation Sans',sans-serif;color:#bdbdbd;white-space:nowrap;letter-spacing:0.9px;will-change:transform;">Default-Material (Material)</div>
<svg style="position:absolute;left:2515px;top:1127px;" width="16" height="16" viewBox="0 0 16 16"><circle cx="8" cy="8" r="7.5" fill="#c4c4c4"/><path d="M5.5 6 A2.6 2.6 0 1 1 8.8 8.4 Q8 8.8 8 10" fill="none" stroke="#3e3e3e" stroke-width="2"/><circle cx="8" cy="12.6" r="1.2" fill="#3e3e3e"/></svg>
<svg style="position:absolute;left:2543px;top:1127px;" width="6" height="16" viewBox="0 0 6 16"><circle cx="3" cy="2.5" r="2.2" fill="#c4c4c4"/><circle cx="3" cy="8" r="2.2" fill="#c4c4c4"/><circle cx="3" cy="13.5" r="2.2" fill="#c4c4c4"/></svg>
<div style="position:absolute;left:2055px;top:1162px;font:normal 18px/1 'Liberation Sans',sans-serif;color:#7d7d7d;white-space:nowrap;letter-spacing:0.6px;will-change:transform;">Shader</div>
<div style="position:absolute;left:2134px;top:1158px;width:346px;height:26px;box-sizing:border-box;background:#474747;border:1px solid #303030;border-radius:4px;"></div>
<div style="position:absolute;left:2139px;top:1162px;font:normal 18px/1 'Liberation Sans',sans-serif;color:#7d7d7d;white-space:nowrap;letter-spacing:0.6px;will-change:transform;">Standard</div>
<svg style="position:absolute;left:2461.5px;top:1168px;" width="11" height="6" viewBox="0 0 11 6"><polygon points="0,0 11,0 5.5,6" fill="#7d7d7d"/></svg>
<div style="position:absolute;left:2485px;top:1158px;width:68px;height:26px;box-sizing:border-box;background:#474747;border:1px solid #303030;border-radius:4px;"></div>
<div style="position:absolute;left:2494px;top:1162px;font:normal 18px/1 'Liberation Sans',sans-serif;color:#7d7d7d;white-space:nowrap;letter-spacing:0.6px;will-change:transform;">Edit...</div>
<svg style="position:absolute;left:1986px;top:1175px;" width="11" height="13" viewBox="0 0 11 13"><polygon points="0,0 11,6.5 0,13" fill="#8a8a8a"/></svg>
<div style="position:absolute;left:1975px;top:1197px;width:585px;height:2px;background:#232323;"></div>
<div style="position:absolute;left:1975px;top:1199px;width:585px;height:14px;background:#3c3c3c;"></div>
<div style="position:absolute;left:1975px;top:1212px;width:585px;height:2px;background:#232323;"></div>
<div style="position:absolute;left:2097px;top:1228px;width:344px;height:35px;box-sizing:border-box;background:#585858;border:1px solid #242424;border-radius:4px;"></div>
<div style="position:absolute;left:2198px;top:1236px;font:normal 18px/1 'Liberation Sans',sans-serif;color:#dadada;white-space:nowrap;letter-spacing:0.6px;will-change:transform;">Add Component</div>
<div style="position:absolute;left:1975px;top:139px;width:1px;height:1208px;background:#2c2c2c;"></div>
<div style="position:absolute;left:2402px;top:1350px;width:1px;height:28px;background:#262626;"></div>
<div style="position:absolute;left:2441px;top:1350px;width:1px;height:28px;background:#262626;"></div>
<div style="position:absolute;left:2480px;top:1350px;width:1px;height:28px;background:#262626;"></div>
<div style="position:absolute;left:2519px;top:1350px;width:1px;height:28px;background:#262626;"></div>
<svg style="position:absolute;left:2410px;top:1354px;" width="23" height="22" viewBox="0 0 23 22"><ellipse cx="11.5" cy="13" rx="6" ry="7.5" fill="#c4c4c4"/><circle cx="11.5" cy="5" r="3.5" fill="#c4c4c4"/><path d="M2 8 L6 10 M21 8 L17 10 M1 14 H5 M22 14 H18 M2 20 L6 17 M21 20 L17 17" stroke="#c4c4c4" stroke-width="1.8"/><path d="M2 2 L21 21" stroke="#191919" stroke-width="3"/><path d="M2 2 L21 21" stroke="#c4c4c4" stroke-width="1.5"/></svg>
<svg style="position:absolute;left:2450px;top:1354px;" width="22" height="22" viewBox="0 0 22 22"><ellipse cx="10" cy="4.5" rx="8.5" ry="3.5" fill="#c4c4c4"/><path d="M1.5 7.5 Q10 12 18.5 7.5 V10.5 Q10 15 1.5 10.5 Z M1.5 13 Q10 17.5 18.5 13 V16 Q10 20.5 1.5 16 Z" fill="#c4c4c4"/><path d="M2 2 L21 21" stroke="#191919" stroke-width="3"/><path d="M2 2 L21 21" stroke="#c4c4c4" stroke-width="1.5"/></svg>
<svg style="position:absolute;left:2488px;top:1354px;" width="23" height="22" viewBox="0 0 23 22"><circle cx="11.5" cy="11" r="8.5" fill="none" stroke="#c4c4c4" stroke-width="1.8" stroke-dasharray="9 4"/><circle cx="11.5" cy="11" r="3" fill="#c4c4c4"/><path d="M2 2 L21 21" stroke="#191919" stroke-width="3"/><path d="M2 2 L21 21" stroke="#c4c4c4" stroke-width="1.5"/></svg>
<svg style="position:absolute;left:2528px;top:1354px;" width="22" height="22" viewBox="0 0 22 22"><circle cx="11" cy="11" r="10" fill="none" stroke="#c4c4c4" stroke-width="1.6"/><path d="M6 11 L9.5 14.5 L16 8" fill="none" stroke="#c4c4c4" stroke-width="1.8"/></svg></body></html>
